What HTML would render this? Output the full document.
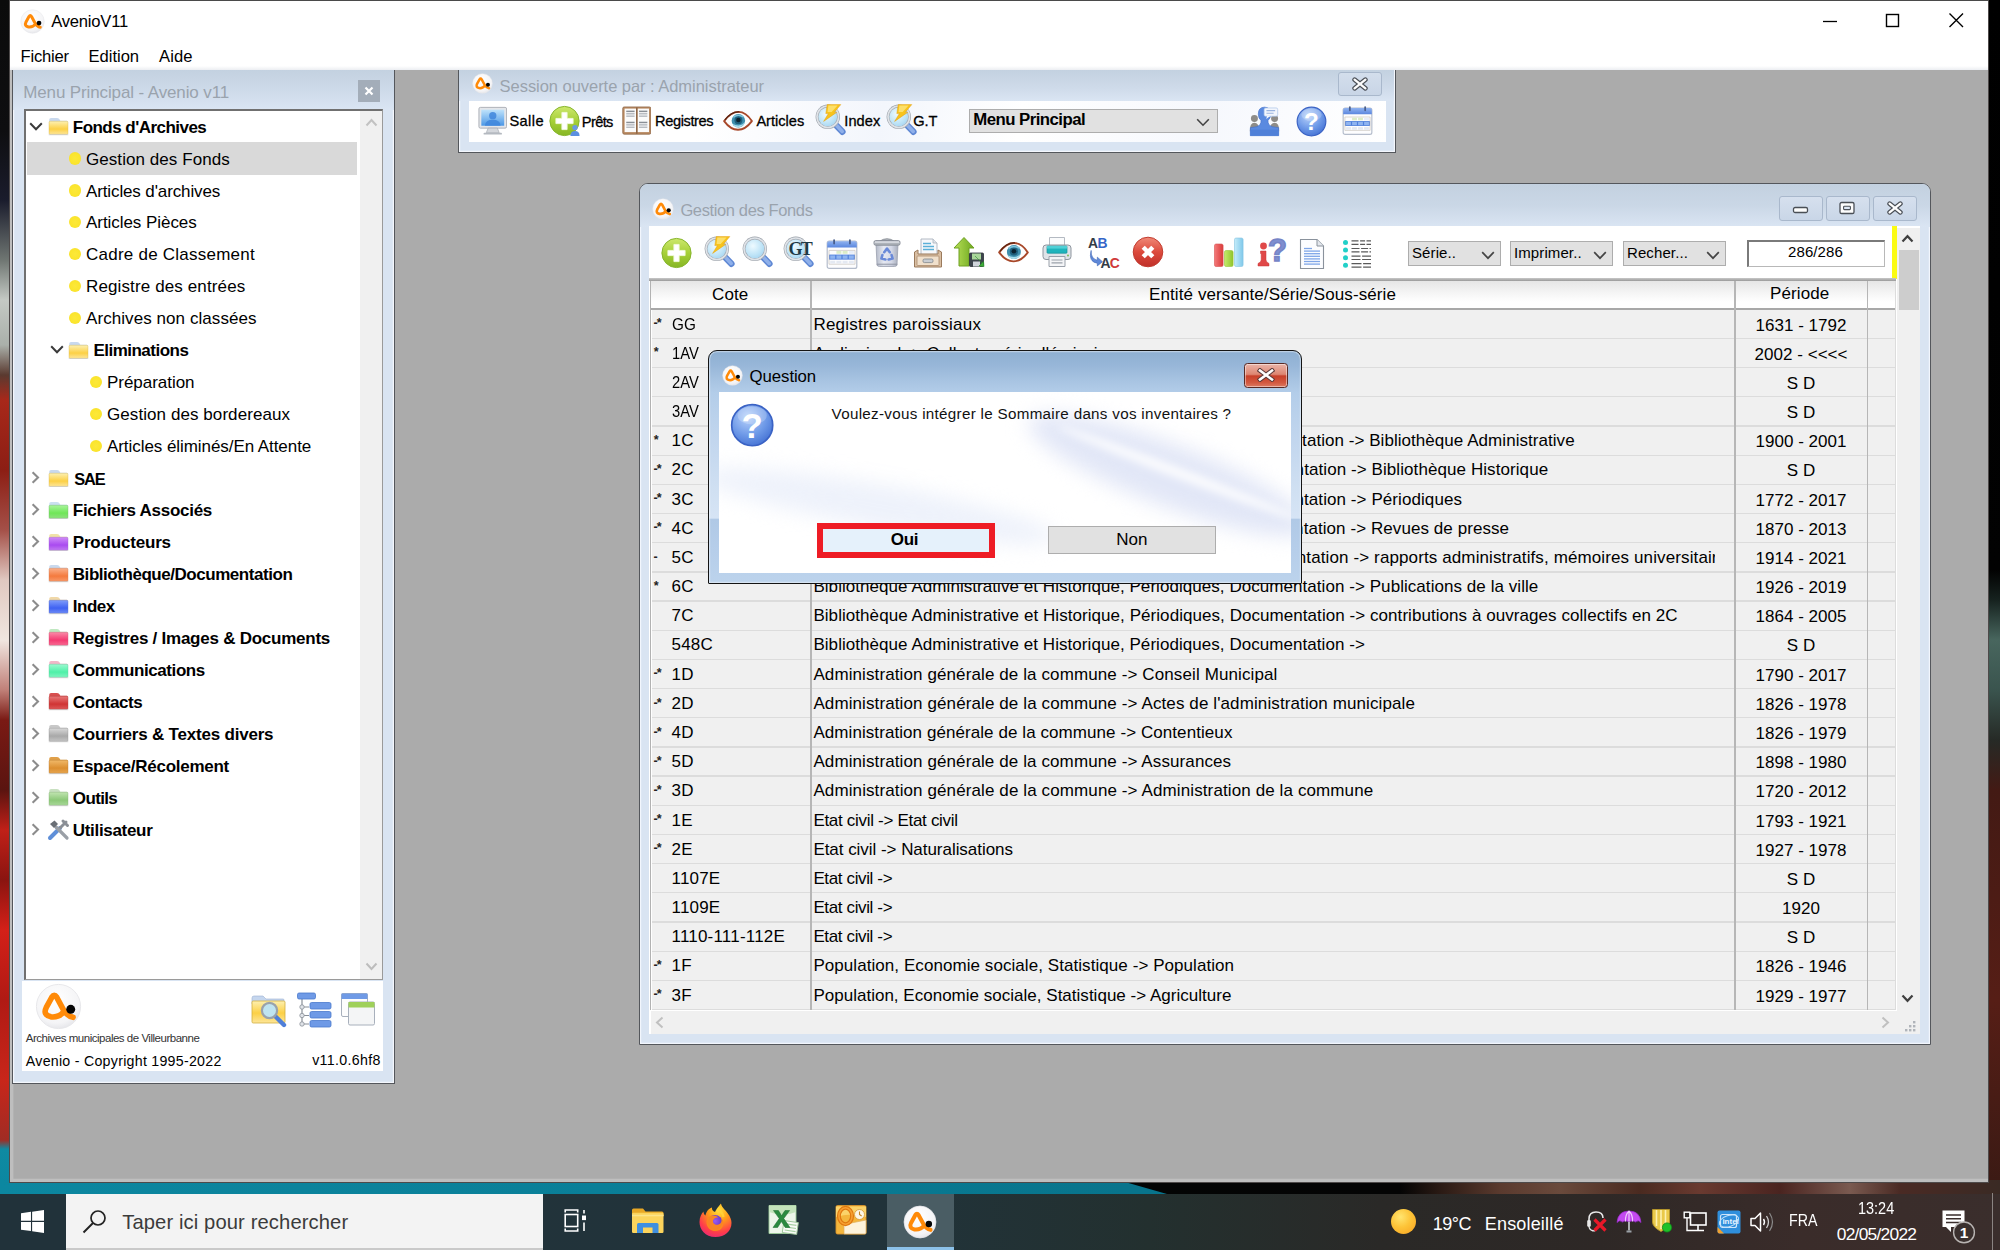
<!DOCTYPE html><html lang="fr"><head><meta charset="utf-8"><title>AvenioV11</title><style>html,body{margin:0;padding:0;}
body{width:2000px;height:1250px;position:relative;overflow:hidden;background:#000;font-family:"Liberation Sans",sans-serif;color:#000;}
div,svg{position:absolute;box-sizing:border-box;}
.t{white-space:pre;line-height:20px;font-size:17px;}
.b{font-weight:bold;}
.tr{white-space:pre;line-height:20px;font-size:17px;letter-spacing:0.07px;}
.tb{white-space:pre;line-height:20px;font-size:17px;font-weight:bold;letter-spacing:-0.5px;}
.cell{white-space:pre;line-height:20px;font-size:17px;letter-spacing:0.2px;}
.seg{white-space:pre;font-family:"Liberation Sans","DejaVu Sans",sans-serif;}
</style></head><body>
<svg width="0" height="0" style="left:0;top:0"><defs>
<radialGradient id="gLogo" cx="0.45" cy="0.35" r="0.75"><stop offset="0" stop-color="#ffffff"/><stop offset="0.7" stop-color="#f4f4f6"/><stop offset="1" stop-color="#dcdde2"/></radialGradient>
<linearGradient id="gGreen" x1="0" y1="0" x2="0" y2="1"><stop offset="0" stop-color="#cde86c"/><stop offset="0.5" stop-color="#a6d038"/><stop offset="1" stop-color="#86b624"/></linearGradient>
<linearGradient id="gRed" x1="0" y1="0" x2="0" y2="1"><stop offset="0" stop-color="#f08a78"/><stop offset="0.5" stop-color="#dc4a3c"/><stop offset="1" stop-color="#c0302a"/></linearGradient>
<radialGradient id="gLens" cx="0.4" cy="0.35" r="0.8"><stop offset="0" stop-color="#eefaff"/><stop offset="0.6" stop-color="#bfe4f7"/><stop offset="1" stop-color="#9fd0ee"/></radialGradient>
<linearGradient id="gHandle" x1="0" y1="0" x2="1" y2="1"><stop offset="0" stop-color="#9db8e8"/><stop offset="1" stop-color="#5b86d6"/></linearGradient>
<radialGradient id="gHelp" cx="0.4" cy="0.3" r="0.8"><stop offset="0" stop-color="#b9d3fb"/><stop offset="0.55" stop-color="#6f9ae8"/><stop offset="1" stop-color="#3c6ad0"/></radialGradient>
<linearGradient id="gMon" x1="0" y1="0" x2="0" y2="1"><stop offset="0" stop-color="#bfe3fb"/><stop offset="1" stop-color="#4b97e6"/></linearGradient>
<radialGradient id="gSun" cx="0.4" cy="0.35" r="0.75"><stop offset="0" stop-color="#ffe36a"/><stop offset="0.6" stop-color="#fdb92e"/><stop offset="1" stop-color="#f59a1c"/></radialGradient>
<linearGradient id="gFY" x1="0" y1="0" x2="0" y2="1"><stop offset="0" stop-color="#fdf0b0"/><stop offset="0.55" stop-color="#fcd045"/><stop offset="1" stop-color="#fde69a"/></linearGradient>
<linearGradient id="gCalTop" x1="0" y1="0" x2="0" y2="1"><stop offset="0" stop-color="#8fb2f0"/><stop offset="1" stop-color="#5a86de"/></linearGradient>
<linearGradient id="gTrash" x1="0" y1="0" x2="1" y2="0"><stop offset="0" stop-color="#a9b0b8"/><stop offset="0.5" stop-color="#dfe3e8"/><stop offset="1" stop-color="#9aa1a9"/></linearGradient>
<linearGradient id="gArrowG" x1="0" y1="0" x2="1" y2="0"><stop offset="0" stop-color="#b7df57"/><stop offset="1" stop-color="#6ea81f"/></linearGradient>
<linearGradient id="gTitle" x1="0" y1="0" x2="0" y2="1"><stop offset="0" stop-color="#c5d3e2"/><stop offset="1" stop-color="#dbe6f4"/></linearGradient>
<linearGradient id="gBtnRed" x1="0" y1="0" x2="0" y2="1"><stop offset="0" stop-color="#e9a99b"/><stop offset="0.45" stop-color="#d4644f"/><stop offset="0.5" stop-color="#c4432f"/><stop offset="1" stop-color="#d6705a"/></linearGradient>
</defs></svg>
<div style="left:0px;top:0px;width:12px;height:1250px;background:linear-gradient(180deg,#0b0b0b 0,#0e0e10 130px,#1a1c2c 200px,#6f7672 260px,#c4c9c4 300px,#aab0aa 345px,#5a3a30 375px,#a8281a 400px,#8c1e14 470px,#a45048 530px,#e0c8c0 580px,#f0e6e0 640px,#c08078 690px,#7a1a14 720px,#5a1410 790px,#c02018 830px,#8a1410 880px,#d42018 930px,#b01a14 1000px,#c8261a 1080px,#a02c24 1140px,#0f8aa2 1149px,#0a86a0 1194px);"></div>
<div style="left:1986px;top:0px;width:14px;height:1250px;background:linear-gradient(180deg,#000 0,#020202 570px,#16221f 600px,#48665e 640px,#3a544e 690px,#262a26 740px,#431a14 790px,#561e16 1000px,#3a1a14 1192px);"></div>
<div style="left:0px;top:1180px;width:2000px;height:14px;background:linear-gradient(90deg,#0c87a0 0,#0a7f98 600px,#08748c 1125px,#030404 1126px,#040404 1400px,#2a1a14 1440px,#5a3a2e 1500px,#6a4a3c 1560px,#4a2a20 1640px,#6a3a30 1700px,#4a2420 1780px,#7a5a50 1850px,#4a2a24 1900px,#3a2a24 2000px);"></div>
<svg style="left:1125px;top:1180px;" width="45" height="14" viewBox="0 0 45 14"><path d="M0 0 H45 V14 H0 Z" fill="#030404"/><path d="M0 0 L0 2 L42 14 L0 14 Z" fill="#08748c"/></svg>
<div style="left:9.2px;top:0px;width:1979.4px;height:1182.8px;background:#ababab;border:1px solid #4e4a4a;border-top:1px solid #4a4a4a;box-shadow:inset 3.4px 0 0 #bebebe, inset 0 -3.2px 0 #bebebe;"></div>
<div style="left:10px;top:1px;width:1978px;height:69px;background:#fff;"></div>
<div style="left:10px;top:65.5px;width:1978px;height:4.5px;background:linear-gradient(180deg,#fff,#eceef2);"></div>
<svg style="left:19.8px;top:8.6px;" width="25" height="25" viewBox="0 0 100 100"><circle cx="50" cy="50" r="47" fill="url(#gLogo)" stroke="#e6e6ea" stroke-width="2"/><path d="M81 73 C71 71 65 65 60 56 L46 30 Q41 22 36 30 L24 52 Q16 68 34 72 Q52 74 62 60" stroke="#ff8a08" stroke-width="12" fill="none" stroke-linecap="round" stroke-linejoin="round"/><circle cx="76" cy="56" r="9.5" fill="#050505"/></svg>
<div class="t" style="left:51.2px;top:11px;font-size:16.6px;line-height:22px;letter-spacing:-0.217px;">AvenioV11</div>
<div class="t" style="left:20.6px;top:45.6px;font-size:16.6px;line-height:22px;letter-spacing:-0.216px;">Fichier</div>
<div class="t" style="left:88.6px;top:45.6px;font-size:16.6px;line-height:22px;letter-spacing:-0.042px;">Edition</div>
<div class="t" style="left:159px;top:45.6px;font-size:16.6px;line-height:22px;letter-spacing:0.094px;">Aide</div>
<svg style="left:1815px;top:5px;" width="160" height="32" viewBox="0 0 160 32"><path d="M8 16.5 H22" stroke="#000" stroke-width="1.3"/><rect x="71.5" y="9.5" width="12" height="12" fill="none" stroke="#000" stroke-width="1.4"/><path d="M134.5 8.5 L148 22 M148 8.5 L134.5 22" stroke="#000" stroke-width="1.4"/></svg>
<div style="left:12px;top:70px;width:383.4px;height:1013.6px;background:#d9e4f2;border:1.5px solid #54575c;border-top:none;box-shadow:inset -1.2px -1.2px 0 #f4f7fd, inset 1.2px 0 0 #f4f7fd;"></div>
<div style="left:13.4px;top:70px;width:380.6px;height:40px;background:linear-gradient(180deg,#c3d1e0 0,#cbd8e7 40%,#dae5f3 100%);"></div>
<div class="t" style="left:23.2px;top:82.2px;font-size:17px;line-height:22px;letter-spacing:-0.121px;color:#9aa3ad;">Menu Principal - Avenio v11</div>
<div style="left:358px;top:80px;width:22px;height:22px;background:#a3adb9;"></div>
<svg style="left:358px;top:80px;" width="22" height="22" viewBox="0 0 22 22"><path d="M7.5 7.5 L14.5 14.5 M14.5 7.5 L7.5 14.5" stroke="#fff" stroke-width="2.2"/></svg>
<div style="left:24px;top:109px;width:359.4px;height:871px;background:#fff;border:2px solid #707070;border-right:1px solid #9a9a9a;border-bottom:1px solid #9a9a9a;"></div>
<div style="left:360.4px;top:111px;width:22px;height:868px;background:#f0f0f0;"></div>
<svg style="left:365px;top:118.4px;" width="13" height="9" viewBox="0 0 13 9"><path d="M1.5 7.5 L6.5 2 L11.5 7.5" fill="none" stroke="#c2c2c2" stroke-width="2"/></svg>
<svg style="left:365px;top:962px;" width="13" height="9" viewBox="0 0 13 9"><path d="M1.5 1.5 L6.5 7 L11.5 1.5" fill="none" stroke="#bdbdbd" stroke-width="2"/></svg>
<div style="left:27px;top:142.4px;width:330.4px;height:32.4px;background:#d9d9d9;"></div>
<svg style="left:29.0px;top:121.7px;" width="14" height="9" viewBox="0 0 14 9"><path d="M1.2 1.2 L7 7.2 L12.8 1.2" fill="none" stroke="#3a3a3a" stroke-width="2"/></svg>
<svg style="left:47.8px;top:117.0px;" width="21" height="18.6" viewBox="0 0 22 20"><defs><linearGradient id="gF1" x1="0" y1="0" x2="0" y2="1"><stop offset="0" stop-color="#fdf0b0"/><stop offset="0.6" stop-color="#fcd045"/><stop offset="1" stop-color="#fde69a"/></linearGradient></defs><path d="M1 3 Q1 1 3 1 L9 1 Q11 1 12 2.5 L13 4 L20 4 Q21 4 21 5 L21 8 L1 8 Z" fill="#c9d9ee"/><rect x="0.8" y="4.6" width="20.4" height="14" rx="1.2" fill="url(#gF1)" stroke="#d9b64a" stroke-width="0.6" stroke-opacity="0.7"/><rect x="0.5" y="18.4" width="21" height="1.2" fill="#b8b8b8" opacity="0.55"/></svg>
<div class="t" style="left:72.8px;top:117.60000000000001px;font-size:17px;line-height:20px;letter-spacing:-0.531px;font-weight:bold;">Fonds d'Archives</div>
<div style="left:69.0px;top:152.162px;width:12.4px;height:12.4px;border-radius:50%;background:radial-gradient(circle,#fce83a 0,#fbe52c 60%,#f2dc3c 85%,#f4e67a 100%);"></div>
<div class="t" style="left:86.0px;top:149.562px;font-size:17px;line-height:20px;letter-spacing:0.065px;">Gestion des Fonds</div>
<div style="left:69.0px;top:184.124px;width:12.4px;height:12.4px;border-radius:50%;background:radial-gradient(circle,#fce83a 0,#fbe52c 60%,#f2dc3c 85%,#f4e67a 100%);"></div>
<div class="t" style="left:86.0px;top:181.524px;font-size:17px;line-height:20px;letter-spacing:-0.123px;">Articles d'archives</div>
<div style="left:69.0px;top:216.086px;width:12.4px;height:12.4px;border-radius:50%;background:radial-gradient(circle,#fce83a 0,#fbe52c 60%,#f2dc3c 85%,#f4e67a 100%);"></div>
<div class="t" style="left:86.0px;top:213.48600000000002px;font-size:17px;line-height:20px;letter-spacing:-0.052px;">Articles Pièces</div>
<div style="left:69.0px;top:248.048px;width:12.4px;height:12.4px;border-radius:50%;background:radial-gradient(circle,#fce83a 0,#fbe52c 60%,#f2dc3c 85%,#f4e67a 100%);"></div>
<div class="t" style="left:86.0px;top:245.448px;font-size:17px;line-height:20px;letter-spacing:0.24px;">Cadre de Classement</div>
<div style="left:69.0px;top:280.01px;width:12.4px;height:12.4px;border-radius:50%;background:radial-gradient(circle,#fce83a 0,#fbe52c 60%,#f2dc3c 85%,#f4e67a 100%);"></div>
<div class="t" style="left:86.0px;top:277.40999999999997px;font-size:17px;line-height:20px;letter-spacing:0.125px;">Registre des entrées</div>
<div style="left:69.0px;top:311.972px;width:12.4px;height:12.4px;border-radius:50%;background:radial-gradient(circle,#fce83a 0,#fbe52c 60%,#f2dc3c 85%,#f4e67a 100%);"></div>
<div class="t" style="left:86.0px;top:309.37199999999996px;font-size:17px;line-height:20px;letter-spacing:0.068px;">Archives non classées</div>
<svg style="left:49.6px;top:345.434px;" width="14" height="9" viewBox="0 0 14 9"><path d="M1.2 1.2 L7 7.2 L12.8 1.2" fill="none" stroke="#3a3a3a" stroke-width="2"/></svg>
<svg style="left:68.4px;top:340.73400000000004px;" width="21" height="18.6" viewBox="0 0 22 20"><defs><linearGradient id="gF2" x1="0" y1="0" x2="0" y2="1"><stop offset="0" stop-color="#fdf0b0"/><stop offset="0.6" stop-color="#fcd045"/><stop offset="1" stop-color="#fde69a"/></linearGradient></defs><path d="M1 3 Q1 1 3 1 L9 1 Q11 1 12 2.5 L13 4 L20 4 Q21 4 21 5 L21 8 L1 8 Z" fill="#c9d9ee"/><rect x="0.8" y="4.6" width="20.4" height="14" rx="1.2" fill="url(#gF2)" stroke="#d9b64a" stroke-width="0.6" stroke-opacity="0.7"/><rect x="0.5" y="18.4" width="21" height="1.2" fill="#b8b8b8" opacity="0.55"/></svg>
<div class="t" style="left:93.4px;top:341.334px;font-size:17px;line-height:20px;letter-spacing:-0.507px;font-weight:bold;">Eliminations</div>
<div style="left:90.0px;top:375.896px;width:12.4px;height:12.4px;border-radius:50%;background:radial-gradient(circle,#fce83a 0,#fbe52c 60%,#f2dc3c 85%,#f4e67a 100%);"></div>
<div class="t" style="left:107.0px;top:373.296px;font-size:17px;line-height:20px;letter-spacing:-0.039px;">Préparation</div>
<div style="left:90.0px;top:407.858px;width:12.4px;height:12.4px;border-radius:50%;background:radial-gradient(circle,#fce83a 0,#fbe52c 60%,#f2dc3c 85%,#f4e67a 100%);"></div>
<div class="t" style="left:107.0px;top:405.258px;font-size:17px;line-height:20px;letter-spacing:0.074px;">Gestion des bordereaux</div>
<div style="left:90.0px;top:439.82px;width:12.4px;height:12.4px;border-radius:50%;background:radial-gradient(circle,#fce83a 0,#fbe52c 60%,#f2dc3c 85%,#f4e67a 100%);"></div>
<div class="t" style="left:107.0px;top:437.21999999999997px;font-size:17px;line-height:20px;letter-spacing:-0.064px;">Articles éliminés/En Attente</div>
<svg style="left:31.4px;top:471.18199999999996px;" width="9" height="13" viewBox="0 0 9 13"><path d="M1.6 1.2 L7 6.5 L1.6 11.8" fill="none" stroke="#8c8c8c" stroke-width="2.1"/></svg>
<svg style="left:47.8px;top:468.582px;" width="21" height="18.6" viewBox="0 0 22 20"><defs><linearGradient id="gF3" x1="0" y1="0" x2="0" y2="1"><stop offset="0" stop-color="#fdf0b0"/><stop offset="0.6" stop-color="#fcd045"/><stop offset="1" stop-color="#fde69a"/></linearGradient></defs><path d="M1 3 Q1 1 3 1 L9 1 Q11 1 12 2.5 L13 4 L20 4 Q21 4 21 5 L21 8 L1 8 Z" fill="#c9d9ee"/><rect x="0.8" y="4.6" width="20.4" height="14" rx="1.2" fill="url(#gF3)" stroke="#d9b64a" stroke-width="0.6" stroke-opacity="0.7"/><rect x="0.5" y="18.4" width="21" height="1.2" fill="#b8b8b8" opacity="0.55"/></svg>
<div class="t" style="left:74.2px;top:469.18199999999996px;font-size:16.4px;font-weight:bold;letter-spacing:-1.1px;line-height:20px;">SAE</div>
<svg style="left:31.4px;top:503.14399999999995px;" width="9" height="13" viewBox="0 0 9 13"><path d="M1.6 1.2 L7 6.5 L1.6 11.8" fill="none" stroke="#8c8c8c" stroke-width="2.1"/></svg>
<svg style="left:47.8px;top:500.544px;" width="21" height="18.6" viewBox="0 0 22 20"><defs><linearGradient id="gF4" x1="0" y1="0" x2="0" y2="1"><stop offset="0" stop-color="#a8f59a"/><stop offset="0.6" stop-color="#6fe658"/><stop offset="1" stop-color="#8fe07f"/></linearGradient></defs><path d="M1 3 Q1 1 3 1 L9 1 Q11 1 12 2.5 L13 4 L20 4 Q21 4 21 5 L21 8 L1 8 Z" fill="#cbe0f0"/><rect x="0.8" y="4.6" width="20.4" height="14" rx="1.2" fill="url(#gF4)" stroke="#6cb860" stroke-width="0.6" stroke-opacity="0.7"/><rect x="0.5" y="18.4" width="21" height="1.2" fill="#b8b8b8" opacity="0.55"/></svg>
<div class="t" style="left:72.8px;top:501.14399999999995px;font-size:17px;line-height:20px;letter-spacing:-0.278px;font-weight:bold;">Fichiers Associés</div>
<svg style="left:31.4px;top:535.106px;" width="9" height="13" viewBox="0 0 9 13"><path d="M1.6 1.2 L7 6.5 L1.6 11.8" fill="none" stroke="#8c8c8c" stroke-width="2.1"/></svg>
<svg style="left:47.8px;top:532.506px;" width="21" height="18.6" viewBox="0 0 22 20"><defs><linearGradient id="gF5" x1="0" y1="0" x2="0" y2="1"><stop offset="0" stop-color="#cf8cf8"/><stop offset="0.6" stop-color="#a94af0"/><stop offset="1" stop-color="#c07af0"/></linearGradient></defs><path d="M1 3 Q1 1 3 1 L9 1 Q11 1 12 2.5 L13 4 L20 4 Q21 4 21 5 L21 8 L1 8 Z" fill="#f0e3a8"/><rect x="0.8" y="4.6" width="20.4" height="14" rx="1.2" fill="url(#gF5)" stroke="#9a5ad0" stroke-width="0.6" stroke-opacity="0.7"/><rect x="0.5" y="18.4" width="21" height="1.2" fill="#b8b8b8" opacity="0.55"/></svg>
<div class="t" style="left:72.8px;top:533.106px;font-size:17px;line-height:20px;letter-spacing:-0.189px;font-weight:bold;">Producteurs</div>
<svg style="left:31.4px;top:567.068px;" width="9" height="13" viewBox="0 0 9 13"><path d="M1.6 1.2 L7 6.5 L1.6 11.8" fill="none" stroke="#8c8c8c" stroke-width="2.1"/></svg>
<svg style="left:47.8px;top:564.468px;" width="21" height="18.6" viewBox="0 0 22 20"><defs><linearGradient id="gF6" x1="0" y1="0" x2="0" y2="1"><stop offset="0" stop-color="#fbb08a"/><stop offset="0.6" stop-color="#f47a3e"/><stop offset="1" stop-color="#f89868"/></linearGradient></defs><path d="M1 3 Q1 1 3 1 L9 1 Q11 1 12 2.5 L13 4 L20 4 Q21 4 21 5 L21 8 L1 8 Z" fill="#c9d9ee"/><rect x="0.8" y="4.6" width="20.4" height="14" rx="1.2" fill="url(#gF6)" stroke="#d0784e" stroke-width="0.6" stroke-opacity="0.7"/><rect x="0.5" y="18.4" width="21" height="1.2" fill="#b8b8b8" opacity="0.55"/></svg>
<div class="t" style="left:72.8px;top:565.068px;font-size:17px;line-height:20px;letter-spacing:-0.456px;font-weight:bold;">Bibliothèque/Documentation</div>
<svg style="left:31.4px;top:599.03px;" width="9" height="13" viewBox="0 0 9 13"><path d="M1.6 1.2 L7 6.5 L1.6 11.8" fill="none" stroke="#8c8c8c" stroke-width="2.1"/></svg>
<svg style="left:47.8px;top:596.43px;" width="21" height="18.6" viewBox="0 0 22 20"><defs><linearGradient id="gF7" x1="0" y1="0" x2="0" y2="1"><stop offset="0" stop-color="#7f9cfa"/><stop offset="0.6" stop-color="#3f62f2"/><stop offset="1" stop-color="#6f8cf6"/></linearGradient></defs><path d="M1 3 Q1 1 3 1 L9 1 Q11 1 12 2.5 L13 4 L20 4 Q21 4 21 5 L21 8 L1 8 Z" fill="#f0d8a8"/><rect x="0.8" y="4.6" width="20.4" height="14" rx="1.2" fill="url(#gF7)" stroke="#4f68c8" stroke-width="0.6" stroke-opacity="0.7"/><rect x="0.5" y="18.4" width="21" height="1.2" fill="#b8b8b8" opacity="0.55"/></svg>
<div class="t" style="left:72.8px;top:597.03px;font-size:17px;line-height:20px;letter-spacing:-0.477px;font-weight:bold;">Index</div>
<svg style="left:31.4px;top:630.992px;" width="9" height="13" viewBox="0 0 9 13"><path d="M1.6 1.2 L7 6.5 L1.6 11.8" fill="none" stroke="#8c8c8c" stroke-width="2.1"/></svg>
<svg style="left:47.8px;top:628.3919999999999px;" width="21" height="18.6" viewBox="0 0 22 20"><defs><linearGradient id="gF8" x1="0" y1="0" x2="0" y2="1"><stop offset="0" stop-color="#fa8aa8"/><stop offset="0.6" stop-color="#f43a72"/><stop offset="1" stop-color="#f76a92"/></linearGradient></defs><path d="M1 3 Q1 1 3 1 L9 1 Q11 1 12 2.5 L13 4 L20 4 Q21 4 21 5 L21 8 L1 8 Z" fill="#bfe8c0"/><rect x="0.8" y="4.6" width="20.4" height="14" rx="1.2" fill="url(#gF8)" stroke="#d04a72" stroke-width="0.6" stroke-opacity="0.7"/><rect x="0.5" y="18.4" width="21" height="1.2" fill="#b8b8b8" opacity="0.55"/></svg>
<div class="t" style="left:72.8px;top:628.992px;font-size:17px;line-height:20px;letter-spacing:-0.242px;font-weight:bold;">Registres / Images &amp; Documents</div>
<svg style="left:31.4px;top:662.9540000000001px;" width="9" height="13" viewBox="0 0 9 13"><path d="M1.6 1.2 L7 6.5 L1.6 11.8" fill="none" stroke="#8c8c8c" stroke-width="2.1"/></svg>
<svg style="left:47.8px;top:660.354px;" width="21" height="18.6" viewBox="0 0 22 20"><defs><linearGradient id="gF9" x1="0" y1="0" x2="0" y2="1"><stop offset="0" stop-color="#9afad0"/><stop offset="0.6" stop-color="#4ff0a8"/><stop offset="1" stop-color="#80f4c0"/></linearGradient></defs><path d="M1 3 Q1 1 3 1 L9 1 Q11 1 12 2.5 L13 4 L20 4 Q21 4 21 5 L21 8 L1 8 Z" fill="#f0b8c8"/><rect x="0.8" y="4.6" width="20.4" height="14" rx="1.2" fill="url(#gF9)" stroke="#58c898" stroke-width="0.6" stroke-opacity="0.7"/><rect x="0.5" y="18.4" width="21" height="1.2" fill="#b8b8b8" opacity="0.55"/></svg>
<div class="t" style="left:72.8px;top:660.9540000000001px;font-size:17px;line-height:20px;letter-spacing:-0.416px;font-weight:bold;">Communications</div>
<svg style="left:31.4px;top:694.916px;" width="9" height="13" viewBox="0 0 9 13"><path d="M1.6 1.2 L7 6.5 L1.6 11.8" fill="none" stroke="#8c8c8c" stroke-width="2.1"/></svg>
<svg style="left:47.8px;top:692.316px;" width="21" height="18.6" viewBox="0 0 22 20"><defs><linearGradient id="gF10" x1="0" y1="0" x2="0" y2="1"><stop offset="0" stop-color="#e87878"/><stop offset="0.6" stop-color="#d03434"/><stop offset="1" stop-color="#dc5858"/></linearGradient></defs><path d="M1 3 Q1 1 3 1 L9 1 Q11 1 12 2.5 L13 4 L20 4 Q21 4 21 5 L21 8 L1 8 Z" fill="#d85050"/><rect x="0.8" y="4.6" width="20.4" height="14" rx="1.2" fill="url(#gF10)" stroke="#a83838" stroke-width="0.6" stroke-opacity="0.7"/><rect x="0.5" y="18.4" width="21" height="1.2" fill="#b8b8b8" opacity="0.55"/></svg>
<div class="t" style="left:72.8px;top:692.916px;font-size:17px;line-height:20px;letter-spacing:-0.391px;font-weight:bold;">Contacts</div>
<svg style="left:31.4px;top:726.878px;" width="9" height="13" viewBox="0 0 9 13"><path d="M1.6 1.2 L7 6.5 L1.6 11.8" fill="none" stroke="#8c8c8c" stroke-width="2.1"/></svg>
<svg style="left:47.8px;top:724.278px;" width="21" height="18.6" viewBox="0 0 22 20"><defs><linearGradient id="gF11" x1="0" y1="0" x2="0" y2="1"><stop offset="0" stop-color="#d8d8d8"/><stop offset="0.6" stop-color="#a8a8a8"/><stop offset="1" stop-color="#c4c4c4"/></linearGradient></defs><path d="M1 3 Q1 1 3 1 L9 1 Q11 1 12 2.5 L13 4 L20 4 Q21 4 21 5 L21 8 L1 8 Z" fill="#c8c8c8"/><rect x="0.8" y="4.6" width="20.4" height="14" rx="1.2" fill="url(#gF11)" stroke="#909090" stroke-width="0.6" stroke-opacity="0.7"/><rect x="0.5" y="18.4" width="21" height="1.2" fill="#b8b8b8" opacity="0.55"/></svg>
<div class="t" style="left:72.8px;top:724.878px;font-size:17px;line-height:20px;letter-spacing:-0.205px;font-weight:bold;">Courriers &amp; Textes divers</div>
<svg style="left:31.4px;top:758.84px;" width="9" height="13" viewBox="0 0 9 13"><path d="M1.6 1.2 L7 6.5 L1.6 11.8" fill="none" stroke="#8c8c8c" stroke-width="2.1"/></svg>
<svg style="left:47.8px;top:756.24px;" width="21" height="18.6" viewBox="0 0 22 20"><defs><linearGradient id="gF12" x1="0" y1="0" x2="0" y2="1"><stop offset="0" stop-color="#f0b868"/><stop offset="0.6" stop-color="#dc8f30"/><stop offset="1" stop-color="#e6a650"/></linearGradient></defs><path d="M1 3 Q1 1 3 1 L9 1 Q11 1 12 2.5 L13 4 L20 4 Q21 4 21 5 L21 8 L1 8 Z" fill="#e0a04a"/><rect x="0.8" y="4.6" width="20.4" height="14" rx="1.2" fill="url(#gF12)" stroke="#b87a30" stroke-width="0.6" stroke-opacity="0.7"/><rect x="0.5" y="18.4" width="21" height="1.2" fill="#b8b8b8" opacity="0.55"/></svg>
<div class="t" style="left:72.8px;top:756.84px;font-size:17px;line-height:20px;letter-spacing:-0.259px;font-weight:bold;">Espace/Récolement</div>
<svg style="left:31.4px;top:790.802px;" width="9" height="13" viewBox="0 0 9 13"><path d="M1.6 1.2 L7 6.5 L1.6 11.8" fill="none" stroke="#8c8c8c" stroke-width="2.1"/></svg>
<svg style="left:47.8px;top:788.202px;" width="21" height="18.6" viewBox="0 0 22 20"><defs><linearGradient id="gF13" x1="0" y1="0" x2="0" y2="1"><stop offset="0" stop-color="#c0e4b0"/><stop offset="0.6" stop-color="#8cc878"/><stop offset="1" stop-color="#a8d898"/></linearGradient></defs><path d="M1 3 Q1 1 3 1 L9 1 Q11 1 12 2.5 L13 4 L20 4 Q21 4 21 5 L21 8 L1 8 Z" fill="#c8e0c0"/><rect x="0.8" y="4.6" width="20.4" height="14" rx="1.2" fill="url(#gF13)" stroke="#80b070" stroke-width="0.6" stroke-opacity="0.7"/><rect x="0.5" y="18.4" width="21" height="1.2" fill="#b8b8b8" opacity="0.55"/></svg>
<div class="t" style="left:72.8px;top:788.802px;font-size:17px;line-height:20px;letter-spacing:-0.634px;font-weight:bold;">Outils</div>
<svg style="left:31.4px;top:822.764px;" width="9" height="13" viewBox="0 0 9 13"><path d="M1.6 1.2 L7 6.5 L1.6 11.8" fill="none" stroke="#8c8c8c" stroke-width="2.1"/></svg>
<svg style="left:47px;top:818.364px;" width="23" height="23" viewBox="0 0 23 23"><path d="M3 20 L13 10" stroke="#5f8fd8" stroke-width="4" stroke-linecap="round"/><path d="M12 11 L19 4 M16 3 L20.5 7.5" stroke="#8a8f96" stroke-width="3" stroke-linecap="round"/><path d="M20 20 L9 9" stroke="#9a9fa6" stroke-width="3.2" stroke-linecap="round"/><path d="M3 6 L7.5 2.5 L11 6 L7 10 Z" fill="#6a6f76"/></svg>
<div class="t" style="left:72.8px;top:820.764px;font-size:17px;line-height:20px;letter-spacing:-0.314px;font-weight:bold;">Utilisateur</div>
<div style="left:22.4px;top:981px;width:361px;height:89.6px;background:#fff;"></div>
<svg style="left:35px;top:983px;" width="47" height="47" viewBox="0 0 100 100"><circle cx="50" cy="50" r="47" fill="url(#gLogo)" stroke="#e6e6ea" stroke-width="2"/><path d="M81 73 C71 71 65 65 60 56 L46 30 Q41 22 36 30 L24 52 Q16 68 34 72 Q52 74 62 60" stroke="#ff8a08" stroke-width="12" fill="none" stroke-linecap="round" stroke-linejoin="round"/><circle cx="76" cy="56" r="9.5" fill="#050505"/></svg>
<div class="t" style="left:25.8px;top:1030px;font-size:11.5px;line-height:16px;letter-spacing:-0.484px;color:#333;">Archives municipales de Villeurbanne</div>
<div class="t" style="left:25.8px;top:1051px;font-size:14.2px;line-height:20px;letter-spacing:0.269px;">Avenio - Copyright 1995-2022</div>
<div class="t" style="left:312.2px;top:1050px;font-size:14.2px;line-height:20px;letter-spacing:0.331px;">v11.0.6hf8</div>
<svg style="left:251px;top:992px;" width="36" height="36" viewBox="0 0 36 36"><path d="M1 6 Q1 4 3 4 L12 4 L15 7 L32 7 Q33 7 33 8 L33 12 L1 12 Z" fill="#c5d6ee" stroke="#9ab0d0" stroke-width="0.6"/><rect x="1" y="9" width="33" height="22" rx="1.2" fill="url(#gFY)" stroke="#d2ae40" stroke-width="0.8"/><path d="M24 24 L33 33" stroke="#4f7fd8" stroke-width="4.4" stroke-linecap="round"/><circle cx="18.5" cy="18.5" r="7.6" fill="#bfe4f0" stroke="#9aa2aa" stroke-width="2.2"/></svg>
<svg style="left:296px;top:992px;" width="37" height="36" viewBox="0 0 37 36"><path d="M6 6 V32 M6 15 H13 M6 23.5 H13 M6 32 H13" stroke="#8a9098" stroke-width="1.2" fill="none"/><rect x="1.5" y="1" width="18" height="6" rx="1.6" fill="#6f9ae6" stroke="#4a78cc" stroke-width="0.8"/><rect x="14" y="10.5" width="21" height="6.5" rx="1.6" fill="#6f9ae6" stroke="#4a78cc" stroke-width="0.8"/><rect x="14" y="19.5" width="21" height="6.5" rx="1.6" fill="#6f9ae6" stroke="#4a78cc" stroke-width="0.8"/><rect x="14" y="28.5" width="21" height="6.5" rx="1.6" fill="#6f9ae6" stroke="#4a78cc" stroke-width="0.8"/><circle cx="6" cy="15" r="2.2" fill="#e0e3e8" stroke="#8a9098" stroke-width="0.8"/><circle cx="6" cy="23.5" r="2.2" fill="#e0e3e8" stroke="#8a9098" stroke-width="0.8"/><circle cx="6" cy="32" r="2.2" fill="#e0e3e8" stroke="#8a9098" stroke-width="0.8"/></svg>
<svg style="left:340px;top:992px;" width="37" height="36" viewBox="0 0 37 36"><rect x="1.5" y="1.5" width="26" height="23" rx="1.5" fill="#fdfdfd" stroke="#a8b0bc" stroke-width="1"/><rect x="1.5" y="1.5" width="26" height="5.5" fill="#6f9ae6"/><rect x="8.5" y="10" width="26" height="23" rx="1.5" fill="#f4f5f6" stroke="#a8b0bc" stroke-width="1"/><rect x="8.5" y="10" width="26" height="5.5" fill="#9fd05a"/></svg>
<div style="left:457.6px;top:70px;width:938px;height:83.2px;background:#d9e4f2;border:1.5px solid #54575c;border-top:none;box-shadow:inset -1.2px -1.2px 0 #f4f7fd, inset 1.2px 0 0 #f4f7fd;"></div>
<div style="left:459px;top:70px;width:935.4px;height:31px;background:linear-gradient(180deg,#c3d1e0 0,#cfdbea 60%,#dae5f3 100%);"></div>
<svg style="left:472px;top:73px;" width="21" height="21" viewBox="0 0 100 100"><circle cx="50" cy="50" r="47" fill="url(#gLogo)" stroke="#e6e6ea" stroke-width="2"/><path d="M81 73 C71 71 65 65 60 56 L46 30 Q41 22 36 30 L24 52 Q16 68 34 72 Q52 74 62 60" stroke="#ff8a08" stroke-width="12" fill="none" stroke-linecap="round" stroke-linejoin="round"/><circle cx="76" cy="56" r="9.5" fill="#050505"/></svg>
<div class="t" style="left:499.6px;top:74.6px;font-size:16.5px;line-height:22px;letter-spacing:-0.042px;color:#9aa3ad;">Session ouverte par : Administrateur</div>
<div style="left:1338.2px;top:72px;width:43.6px;height:24px;border:1px solid #a9b8cc;border-radius:3px;background:linear-gradient(180deg,#d3deec,#c8d5e6);"></div>
<svg style="left:1351px;top:77px;" width="18" height="14" viewBox="0 0 18 14"><path d="M3.6 2.6 L14.4 11.4 M14.4 2.6 L3.6 11.4" stroke="#4a4f56" stroke-width="4.6" stroke-linecap="round"/><path d="M3.6 2.6 L14.4 11.4 M14.4 2.6 L3.6 11.4" stroke="#fdfdfd" stroke-width="2.3" stroke-linecap="round"/></svg>
<div style="left:469px;top:101px;width:917px;height:41px;background:linear-gradient(100deg,#fff 0,#fff 25%,#f3f6fc 45%,#fff 60%,#f6f8fd 80%,#fff 100%);"></div>
<svg style="left:477.5px;top:105.5px;" width="29.5" height="29.5" viewBox="0 0 32 32"><rect x="1" y="1.5" width="30" height="22.5" rx="1.6" fill="#e4e6ea" stroke="#a8adb4" stroke-width="1"/><rect x="3.6" y="4" width="24.8" height="17.4" fill="url(#gMon)"/><circle cx="16" cy="10.5" r="4" fill="#3f86dc" opacity="0.85"/><path d="M7.5 21.4 Q8 15 16 15 Q24 15 24.5 21.4 Z" fill="#3f86dc" opacity="0.85"/><path d="M11 24 L9 29 H23 L21 24 Z" fill="#d4d7dc" stroke="#a8adb4" stroke-width="0.8"/><rect x="6" y="29" width="20" height="2" rx="1" fill="#b4b9c0"/></svg>
<div class="t" style="left:509.4px;top:112.4px;font-size:14.6px;line-height:18px;letter-spacing:0.437px;-webkit-text-stroke:0.3px #000;">Salle</div>
<svg style="left:549px;top:105px;" width="32" height="32" viewBox="0 0 32 32"><circle cx="15.5" cy="16" r="14.6" fill="url(#gGreen)" stroke="#86b52c" stroke-width="1"/><path d="M12.9 7.4 H18.1 V13.4 H24.1 V18.6 H18.1 V24.6 H12.9 V18.6 H6.9 V13.4 H12.9 Z" fill="#fff" stroke="#f2f9dc" stroke-width="0.9" stroke-linejoin="round"/><circle cx="26" cy="22.6" r="2.7" fill="#6a98e4"/><path d="M21.4 31 Q21.4 26 26 26 Q30.6 26 30.6 31 Z" fill="#5b8fe0"/></svg>
<div class="t" style="left:581.8px;top:113.4px;font-size:14.6px;line-height:18px;letter-spacing:-0.616px;-webkit-text-stroke:0.3px #000;">Prêts</div>
<svg style="left:621.6px;top:105.8px;" width="29.6" height="29.6" viewBox="0 0 32 32"><rect x="0.8" y="1" width="30.4" height="29.5" rx="1.6" fill="#b98a62" stroke="#8c6444" stroke-width="0.8"/><rect x="2.8" y="2.8" width="12.6" height="25.4" fill="#fbfbfb"/><rect x="16.6" y="2.8" width="12.6" height="25.4" fill="#fbfbfb"/><rect x="15.2" y="1.5" width="1.6" height="28.5" fill="#8c6444"/><rect x="4.6" y="5" width="9" height="1.6" fill="#8a8f96"/><rect x="4.6" y="7.6" width="9" height="1.6" fill="#b8bcc2"/><rect x="4.6" y="10.2" width="9" height="1.6" fill="#b8bcc2"/><rect x="4.6" y="17" width="9" height="1.6" fill="#8a8f96"/><rect x="4.6" y="19.6" width="9" height="1.6" fill="#b8bcc2"/><rect x="4.6" y="22.2" width="9" height="1.6" fill="#b8bcc2"/><rect x="18.4" y="5" width="9" height="1.6" fill="#8a8f96"/><rect x="18.4" y="7.6" width="9" height="1.6" fill="#b8bcc2"/><rect x="18.4" y="10.2" width="9" height="1.6" fill="#b8bcc2"/><rect x="18.4" y="17" width="9" height="1.6" fill="#8a8f96"/><rect x="18.4" y="19.6" width="9" height="1.6" fill="#b8bcc2"/><rect x="18.4" y="22.2" width="9" height="1.6" fill="#b8bcc2"/></svg>
<div class="t" style="left:655px;top:112.4px;font-size:14.6px;line-height:18px;letter-spacing:-0.38px;-webkit-text-stroke:0.3px #000;">Registres</div>
<svg style="left:723.4px;top:110px;" width="30" height="21.599999999999998" viewBox="0 0 32 23"><path d="M1.2 11.8 Q8.5 2 16.5 2 Q24.5 2 30.8 11.8 Q24 21 16 21 Q8 21 1.2 11.8 Z" fill="#fdfdfd" stroke="#a8482a" stroke-width="2" stroke-linejoin="round"/><path d="M2 10.6 Q9 1.4 17.5 2" stroke="#5a2412" stroke-width="1.3" fill="none"/><circle cx="16.4" cy="11.4" r="7.2" fill="#3f8fae"/><path d="M10.4 14.6 Q12 19 17.6 18.4 Q22.6 17.4 23.4 12.6 Q21 16.4 16.4 16.4 Q12.6 16.4 10.4 14.6 Z" fill="#a8dcec"/><circle cx="16.4" cy="10.8" r="4.2" fill="#1f5f7c"/><circle cx="16.4" cy="10.6" r="2.4" fill="#0a2230"/><path d="M11 7.6 Q16 3.8 22 7.4" stroke="#7fc4dc" stroke-width="1.4" fill="none"/></svg>
<div class="t" style="left:756.4px;top:112.4px;font-size:14.6px;line-height:18px;letter-spacing:-0.006px;-webkit-text-stroke:0.3px #000;">Articles</div>
<svg style="left:815px;top:104px;" width="32" height="32" viewBox="0 0 32 32"><path d="M21.6 21.8 L27.4 27.8" stroke="#5f88d4" stroke-width="6.4" stroke-linecap="round"/><path d="M21.6 21.6 L27.2 27.4" stroke="#8fb0ea" stroke-width="3.6" stroke-linecap="round"/><circle cx="12.8" cy="12.8" r="12.2" fill="#9aa0a8"/><circle cx="12.8" cy="12.8" r="11.6" fill="#dfe3e8"/><circle cx="12.8" cy="12.8" r="10" fill="#a4aab2"/><circle cx="12.8" cy="12.8" r="9.4" fill="url(#gLens)"/><path d="M12.2 0.6 L25.8 0.6 L19.2 8.4 L21.6 8.4 L8.6 17.4 L13.4 9.6 L10.8 9.6 Z" fill="#f8c41c" stroke="#e4a018" stroke-width="0.5"/><path d="M13.4 1.6 L22.6 1.6 L16.6 8 L12.6 8 Z" fill="#fde680" opacity="0.8"/></svg>
<div class="t" style="left:844.3px;top:112.4px;font-size:14.6px;line-height:18px;letter-spacing:0.074px;-webkit-text-stroke:0.3px #000;">Index</div>
<svg style="left:886px;top:104px;" width="32" height="32" viewBox="0 0 32 32"><path d="M21.6 21.8 L27.4 27.8" stroke="#5f88d4" stroke-width="6.4" stroke-linecap="round"/><path d="M21.6 21.6 L27.2 27.4" stroke="#8fb0ea" stroke-width="3.6" stroke-linecap="round"/><circle cx="12.8" cy="12.8" r="12.2" fill="#9aa0a8"/><circle cx="12.8" cy="12.8" r="11.6" fill="#dfe3e8"/><circle cx="12.8" cy="12.8" r="10" fill="#a4aab2"/><circle cx="12.8" cy="12.8" r="9.4" fill="url(#gLens)"/><path d="M12.2 0.6 L25.8 0.6 L19.2 8.4 L21.6 8.4 L8.6 17.4 L13.4 9.6 L10.8 9.6 Z" fill="#f8c41c" stroke="#e4a018" stroke-width="0.5"/><path d="M13.4 1.6 L22.6 1.6 L16.6 8 L12.6 8 Z" fill="#fde680" opacity="0.8"/></svg>
<div class="t" style="left:913.3px;top:112.4px;font-size:14.6px;line-height:18px;letter-spacing:-0.164px;-webkit-text-stroke:0.3px #000;">G.T</div>
<div style="left:969px;top:109px;width:249px;height:24px;background:#e1e1e1;border:1px solid #adadad;"></div>
<div class="t" style="left:973.2px;top:109.8px;font-size:16.8px;line-height:20px;letter-spacing:-0.535px;font-weight:bold;">Menu Principal</div>
<svg style="left:1196px;top:117.6px;" width="14" height="9" viewBox="0 0 14 9"><path d="M1.2 1.2 L7 7.2 L12.8 1.2" fill="none" stroke="#444" stroke-width="1.6"/></svg>
<svg style="left:1249px;top:106px;" width="31" height="31" viewBox="0 0 32 32"><circle cx="5.6" cy="13" r="3.6" fill="#8e8c88"/><path d="M0.8 26 Q0.8 17.4 5.6 17.4 Q10.4 17.4 10.4 26 Z" fill="#8e8c88"/><circle cx="26.4" cy="13" r="3.6" fill="#8e8c88"/><path d="M21.6 26 Q21.6 17.4 26.4 17.4 Q31.2 17.4 31.2 26 Z" fill="#8e8c88"/><path d="M16 1.2 Q22.4 1.2 22.4 8.4 Q22.4 12.6 19.6 15 Q19.2 19.6 24 21.4 L30.6 22.4 L30.6 30.6 L1.4 30.6 L1.4 22.4 L8 21.4 Q12.8 19.6 12.4 15 Q9.6 12.6 9.6 8.4 Q9.6 1.2 16 1.2 Z" fill="#5a8ae0" stroke="#4472cc" stroke-width="0.7"/><rect x="1.4" y="24.4" width="29.2" height="6.2" fill="#4f80d8"/><rect x="15.6" y="2" width="14" height="8.6" rx="1.6" fill="#f2f6fd" stroke="#a8c0e8" stroke-width="0.7"/><path d="M18.6 10.2 L17.8 13.4 L22 10.4 Z" fill="#f2f6fd"/><path d="M18 4.8 H27 M18 7.4 H25.4" stroke="#9ab4e0" stroke-width="1.1"/></svg>
<svg style="left:1296px;top:106px;" width="31" height="31" viewBox="0 0 32 32"><circle cx="16" cy="16" r="14.8" fill="url(#gHelp)" stroke="#3a62c4" stroke-width="1.2"/><ellipse cx="16" cy="9" rx="10.5" ry="6.5" fill="#ffffff" opacity="0.22"/><text x="16" y="25" text-anchor="middle" font-family="Liberation Sans,sans-serif" font-weight="bold" font-size="25" fill="#ffffff">?</text></svg>
<svg style="left:1342px;top:105px;" width="31" height="31" viewBox="0 0 32 32"><rect x="1.2" y="3.2" width="29.6" height="27.2" rx="2" fill="#fdfdfe" stroke="#b4bccb" stroke-width="1.2"/><path d="M1.2 5.2 Q1.2 3.2 3.2 3.2 L28.8 3.2 Q30.8 3.2 30.8 5.2 L30.8 9.6 L1.2 9.6 Z" fill="url(#gCalTop)"/><rect x="3" y="16.6" width="26" height="5" fill="#4f7fdc"/><path d="M3 12.4 H29 V26.2 H3 Z" fill="none" stroke="#c9c3bd" stroke-width="0.7"/><rect x="7.2" y="1.2" width="1.8" height="5.2" rx="0.9" fill="#4a5f8c"/><rect x="23" y="1.2" width="1.8" height="5.2" rx="0.9" fill="#4a5f8c"/><rect x="4.2" y="17.4" width="5" height="3.4" fill="#8fb4f0"/><rect x="4.2" y="22.8" width="5" height="2.8" fill="#e4e9f2"/><rect x="10.4" y="13" width="5" height="2.8" fill="#dcecc8"/><rect x="10.4" y="17.4" width="5" height="3.4" fill="#8fb4f0"/><rect x="10.4" y="22.8" width="5" height="2.8" fill="#e4e9f2"/><rect x="16.6" y="13" width="5" height="2.8" fill="#dcecc8"/><rect x="16.6" y="17.4" width="5" height="3.4" fill="#8fb4f0"/><rect x="16.6" y="22.8" width="5" height="2.8" fill="#e4e9f2"/><rect x="22.8" y="13" width="5" height="2.8" fill="#e8eef8"/><rect x="22.8" y="17.4" width="5" height="3.4" fill="#8fb4f0"/><rect x="22.8" y="22.8" width="5" height="2.8" fill="#e4e9f2"/></svg>
<div style="left:639px;top:183px;width:1292.4px;height:861.6px;background:#d9e4f2;border:1.5px solid #54575c;border-radius:9px 9px 0 0;box-shadow:inset 0 0 0 1.2px rgba(246,249,255,0.85);"></div>
<div style="left:640px;top:184px;width:1290.4px;height:43px;background:linear-gradient(180deg,#c3d1e0 0,#cad7e6 50%,#dae5f3 100%);border-radius:8px 8px 0 0;"></div>
<svg style="left:652px;top:198px;" width="22" height="22" viewBox="0 0 100 100"><circle cx="50" cy="50" r="47" fill="url(#gLogo)" stroke="#e6e6ea" stroke-width="2"/><path d="M81 73 C71 71 65 65 60 56 L46 30 Q41 22 36 30 L24 52 Q16 68 34 72 Q52 74 62 60" stroke="#ff8a08" stroke-width="12" fill="none" stroke-linecap="round" stroke-linejoin="round"/><circle cx="76" cy="56" r="9.5" fill="#050505"/></svg>
<div class="t" style="left:680.4px;top:199.3px;font-size:16.5px;line-height:22px;letter-spacing:-0.375px;color:#9aa3ad;">Gestion des Fonds</div>
<div style="left:1779px;top:196px;width:44px;height:25px;border:1px solid #a9b8cc;border-radius:3px;background:linear-gradient(180deg,#d6e0ee,#c9d6e7);"></div>
<div style="left:1826px;top:196px;width:44px;height:25px;border:1px solid #a9b8cc;border-radius:3px;background:linear-gradient(180deg,#d6e0ee,#c9d6e7);"></div>
<div style="left:1873px;top:196px;width:44px;height:25px;border:1px solid #a9b8cc;border-radius:3px;background:linear-gradient(180deg,#d6e0ee,#c9d6e7);"></div>
<svg style="left:1792px;top:206.4px;" width="18" height="9" viewBox="0 0 18 9"><rect x="1.5" y="1.5" width="14" height="5" rx="1.6" fill="#fdfdfd" stroke="#4a4f56" stroke-width="1.3"/></svg>
<svg style="left:1838px;top:200px;" width="18" height="16" viewBox="0 0 18 16"><rect x="2" y="2.5" width="14" height="11" rx="1.6" fill="#fdfdfd" stroke="#4a4f56" stroke-width="1.3"/><rect x="5.6" y="6.2" width="6.8" height="3.4" rx="0.8" fill="#dce6f4" stroke="#4a4f56" stroke-width="1.1"/></svg>
<svg style="left:1886px;top:201px;" width="18" height="14" viewBox="0 0 18 14"><path d="M3.6 2.6 L14.4 11.4 M14.4 2.6 L3.6 11.4" stroke="#4a4f56" stroke-width="4.6" stroke-linecap="round"/><path d="M3.6 2.6 L14.4 11.4 M14.4 2.6 L3.6 11.4" stroke="#fdfdfd" stroke-width="2.3" stroke-linecap="round"/></svg>
<div style="left:649px;top:226px;width:1271px;height:808.4px;background:#fff;"></div>
<svg style="left:661px;top:237px;" width="32" height="32" viewBox="0 0 32 32"><circle cx="15.5" cy="16" r="14.6" fill="url(#gGreen)" stroke="#86b52c" stroke-width="1"/><path d="M12.9 7.4 H18.1 V13.4 H24.1 V18.6 H18.1 V24.6 H12.9 V18.6 H6.9 V13.4 H12.9 Z" fill="#fff" stroke="#f2f9dc" stroke-width="0.9" stroke-linejoin="round"/></svg>
<svg style="left:704px;top:236px;" width="32" height="32" viewBox="0 0 32 32"><path d="M21.6 21.8 L27.4 27.8" stroke="#5f88d4" stroke-width="6.4" stroke-linecap="round"/><path d="M21.6 21.6 L27.2 27.4" stroke="#8fb0ea" stroke-width="3.6" stroke-linecap="round"/><circle cx="12.8" cy="12.8" r="12.2" fill="#9aa0a8"/><circle cx="12.8" cy="12.8" r="11.6" fill="#dfe3e8"/><circle cx="12.8" cy="12.8" r="10" fill="#a4aab2"/><circle cx="12.8" cy="12.8" r="9.4" fill="url(#gLens)"/><path d="M12.2 0.6 L25.8 0.6 L19.2 8.4 L21.6 8.4 L8.6 17.4 L13.4 9.6 L10.8 9.6 Z" fill="#f8c41c" stroke="#e4a018" stroke-width="0.5"/><path d="M13.4 1.6 L22.6 1.6 L16.6 8 L12.6 8 Z" fill="#fde680" opacity="0.8"/></svg>
<svg style="left:742px;top:236px;" width="32" height="32" viewBox="0 0 32 32"><path d="M21.6 21.8 L27.4 27.8" stroke="#5f88d4" stroke-width="6.4" stroke-linecap="round"/><path d="M21.6 21.6 L27.2 27.4" stroke="#8fb0ea" stroke-width="3.6" stroke-linecap="round"/><circle cx="12.8" cy="12.8" r="12.2" fill="#9aa0a8"/><circle cx="12.8" cy="12.8" r="11.6" fill="#dfe3e8"/><circle cx="12.8" cy="12.8" r="10" fill="#a4aab2"/><circle cx="12.8" cy="12.8" r="9.4" fill="url(#gLens)"/></svg>
<svg style="left:783px;top:236px;" width="32" height="32" viewBox="0 0 32 32"><path d="M21.6 21.8 L27.4 27.8" stroke="#5f88d4" stroke-width="6.4" stroke-linecap="round"/><path d="M21.6 21.6 L27.2 27.4" stroke="#8fb0ea" stroke-width="3.6" stroke-linecap="round"/><circle cx="12.8" cy="12.8" r="12.2" fill="#9aa0a8"/><circle cx="12.8" cy="12.8" r="11.6" fill="#dfe3e8"/><circle cx="12.8" cy="12.8" r="10" fill="#a4aab2"/><circle cx="12.8" cy="12.8" r="9.4" fill="url(#gLens)"/><text x="5.4" y="18.6" font-family="Liberation Serif,serif" font-weight="bold" font-size="18" fill="#1f3a46" letter-spacing="-1.6">GT</text></svg>
<svg style="left:826px;top:238px;" width="32" height="32" viewBox="0 0 32 32"><rect x="1.2" y="3.2" width="29.6" height="27.2" rx="2" fill="#fdfdfe" stroke="#b4bccb" stroke-width="1.2"/><path d="M1.2 5.2 Q1.2 3.2 3.2 3.2 L28.8 3.2 Q30.8 3.2 30.8 5.2 L30.8 9.6 L1.2 9.6 Z" fill="url(#gCalTop)"/><rect x="3" y="16.6" width="26" height="5" fill="#4f7fdc"/><path d="M3 12.4 H29 V26.2 H3 Z" fill="none" stroke="#c9c3bd" stroke-width="0.7"/><rect x="7.2" y="1.2" width="1.8" height="5.2" rx="0.9" fill="#4a5f8c"/><rect x="23" y="1.2" width="1.8" height="5.2" rx="0.9" fill="#4a5f8c"/><rect x="4.2" y="17.4" width="5" height="3.4" fill="#8fb4f0"/><rect x="4.2" y="22.8" width="5" height="2.8" fill="#e4e9f2"/><rect x="10.4" y="13" width="5" height="2.8" fill="#dcecc8"/><rect x="10.4" y="17.4" width="5" height="3.4" fill="#8fb4f0"/><rect x="10.4" y="22.8" width="5" height="2.8" fill="#e4e9f2"/><rect x="16.6" y="13" width="5" height="2.8" fill="#dcecc8"/><rect x="16.6" y="17.4" width="5" height="3.4" fill="#8fb4f0"/><rect x="16.6" y="22.8" width="5" height="2.8" fill="#e4e9f2"/><rect x="22.8" y="13" width="5" height="2.8" fill="#e8eef8"/><rect x="22.8" y="17.4" width="5" height="3.4" fill="#8fb4f0"/><rect x="22.8" y="22.8" width="5" height="2.8" fill="#e4e9f2"/></svg>
<svg style="left:871px;top:236px;" width="32" height="32" viewBox="0 0 32 32"><defs><linearGradient id="gTr2" x1="0" x2="1"><stop offset="0" stop-color="#b4bac8"/><stop offset="0.35" stop-color="#e6e9f2"/><stop offset="0.7" stop-color="#d4d8e6"/><stop offset="1" stop-color="#a8aebc"/></linearGradient></defs><path d="M5 8 L6 28.5 Q6 30.5 8.5 30.5 L23.5 30.5 Q26 30.5 26 28.5 L27 8 Z" fill="url(#gTr2)" stroke="#9aa0ae" stroke-width="0.8"/><rect x="5.6" y="27.6" width="20.8" height="1.6" fill="#8e94a2" opacity="0.7"/><path d="M9 5 Q16 0.5 23 5" fill="#b8bcc4" stroke="#7a8088" stroke-width="0.8"/><rect x="3" y="4.6" width="26" height="4.6" rx="1.6" fill="#d4d7dd" stroke="#7f858e" stroke-width="0.9"/><path d="M3.6 8 H28.4" stroke="#8a9098" stroke-width="1"/><path d="M13.2 16.2 L16 12.6 L18.8 16.2 M20.6 19 L21.6 22.6 L17.6 23.4 M14.4 23.4 L10.4 22.6 L11.4 19" fill="none" stroke="#6a8ad8" stroke-width="2.6" stroke-linejoin="round" stroke-linecap="round"/></svg>
<svg style="left:912px;top:237px;" width="32" height="32" viewBox="0 0 32 32"><path d="M9 2 L21 2 L25 6 L25 18 L9 18 Z" fill="#f6f8fb" stroke="#aab2bd" stroke-width="0.9"/><path d="M11 6.5 H19 M11 9.5 H22 M11 12.5 H22" stroke="#5bb0d8" stroke-width="1.4"/><path d="M21 2 L21 6 L25 6" fill="#dfe4ea" stroke="#aab2bd" stroke-width="0.8"/><path d="M2.5 15 L6 13 L6 17 L26 17 L26 13 L29.5 15 L29.5 30 L2.5 30 Z" fill="#d9bea2" stroke="#9a7a5c" stroke-width="1"/><rect x="5" y="19" width="22" height="9.5" rx="0.8" fill="#f0e0cc" stroke="#a98a6c" stroke-width="0.8"/><rect x="11" y="22" width="10" height="3.6" rx="1.4" fill="#c9cdd2" stroke="#7f858c" stroke-width="0.8"/></svg>
<svg style="left:953px;top:236px;" width="32" height="32" viewBox="0 0 32 32"><path d="M11 1.5 L21 12 L16 12 L16 30 L6 30 L6 12 L1 12 Z" fill="url(#gArrowG)" stroke="#6ea022" stroke-width="1"/><rect x="16.5" y="17" width="14" height="13.5" rx="1" fill="#3c444c" stroke="#2a3036" stroke-width="0.8"/><rect x="19" y="17.5" width="9" height="6" fill="#a9d69a"/><rect x="20" y="25.5" width="7" height="5" fill="#cfd4da"/><path d="M22 20 L29 27 L26 30 L31 30.5 L30.5 25.5 L29 27" fill="#3fae3a" stroke="#2a8a28" stroke-width="0.6"/></svg>
<svg style="left:997.6px;top:241.4px;" width="31" height="22.32" viewBox="0 0 32 23"><path d="M1.2 11.8 Q8.5 2 16.5 2 Q24.5 2 30.8 11.8 Q24 21 16 21 Q8 21 1.2 11.8 Z" fill="#fdfdfd" stroke="#a8482a" stroke-width="2" stroke-linejoin="round"/><path d="M2 10.6 Q9 1.4 17.5 2" stroke="#5a2412" stroke-width="1.3" fill="none"/><circle cx="16.4" cy="11.4" r="7.2" fill="#3f8fae"/><path d="M10.4 14.6 Q12 19 17.6 18.4 Q22.6 17.4 23.4 12.6 Q21 16.4 16.4 16.4 Q12.6 16.4 10.4 14.6 Z" fill="#a8dcec"/><circle cx="16.4" cy="10.8" r="4.2" fill="#1f5f7c"/><circle cx="16.4" cy="10.6" r="2.4" fill="#0a2230"/><path d="M11 7.6 Q16 3.8 22 7.4" stroke="#7fc4dc" stroke-width="1.4" fill="none"/></svg>
<svg style="left:1041px;top:236px;" width="32" height="32" viewBox="0 0 32 32"><path d="M8.5 1.5 H23.5 V11 H8.5 Z" fill="#fafbfc" stroke="#b4bac2" stroke-width="1"/><rect x="2" y="9" width="28" height="14.5" rx="3" fill="#dfe3e8" stroke="#8f969f" stroke-width="1"/><rect x="6" y="10" width="20" height="7.2" rx="0.8" fill="#1fb4bc" stroke="#15929a" stroke-width="0.7"/><rect x="6" y="10" width="20" height="2.6" fill="#4ed0d6"/><path d="M8 20.5 H24 V30.5 H8 Z" fill="#f4f5f7" stroke="#9aa1aa" stroke-width="1"/><path d="M10.5 24 H21.5 M10.5 26.8 H21.5" stroke="#9aa1aa" stroke-width="1.2"/><circle cx="27" cy="19.5" r="0.9" fill="#7ab648"/></svg>
<svg style="left:1086px;top:235px;" width="35" height="35" viewBox="0 0 34 34"><text x="2" y="12.5" font-family="Liberation Sans,sans-serif" font-weight="bold" font-size="13.5" letter-spacing="-0.6"><tspan fill="#333b46">A</tspan><tspan fill="#3465c8">B</tspan></text><text x="14" y="32" font-family="Liberation Sans,sans-serif" font-weight="bold" font-size="13.5" letter-spacing="-0.6"><tspan fill="#333b46">A</tspan><tspan fill="#d03a3a">C</tspan></text><path d="M5 15 Q4.5 23 11 24.5 L11 21.5 L16 26 L11 30 L11 27.5 Q2 26 5 15 Z" fill="#5f88d8" stroke="#3f68b8" stroke-width="0.6"/></svg>
<svg style="left:1132px;top:236px;" width="32" height="32" viewBox="0 0 32 32"><circle cx="16" cy="16" r="14.8" fill="url(#gRed)" stroke="#c23c30" stroke-width="1"/><path d="M11.2 11.2 L20.8 20.8 M20.8 11.2 L11.2 20.8" stroke="#fff" stroke-width="4.4" stroke-linecap="butt"/></svg>
<svg style="left:1213px;top:236px;" width="32" height="32" viewBox="0 0 32 32"><defs><linearGradient id="gB1" x1="0" x2="1"><stop offset="0" stop-color="#f47a7a"/><stop offset="1" stop-color="#d83a3a"/></linearGradient><linearGradient id="gB2" x1="0" x2="1"><stop offset="0" stop-color="#c4ea6a"/><stop offset="1" stop-color="#8fc42a"/></linearGradient><linearGradient id="gB3" x1="0" x2="1"><stop offset="0" stop-color="#c4ecfa"/><stop offset="1" stop-color="#7fc8ea"/></linearGradient></defs><rect x="1.5" y="8" width="8.6" height="22.5" rx="1.6" fill="url(#gB1)" stroke="#d85050" stroke-width="0.6"/><rect x="11.5" y="14.5" width="8.6" height="16" rx="1.6" fill="url(#gB2)" stroke="#96c43a" stroke-width="0.6"/><rect x="21.5" y="2" width="8.6" height="28.5" rx="1.6" fill="url(#gB3)" stroke="#86c4e0" stroke-width="0.6"/></svg>
<svg style="left:1256px;top:236px;" width="32" height="32" viewBox="0 0 32 32"><text x="12" y="25" font-family="Liberation Sans,sans-serif" font-weight="bold" font-size="31" fill="#7f8fd0" stroke="#7584c6" stroke-width="1.5">?</text><circle cx="7.5" cy="10" r="3.4" fill="#e04848"/><path d="M4.5 15 H10 V24 Q10 26 13 27.5 V30 H2 V27.5 Q5.2 26 5.2 24 V17.5 H4.5 Z" fill="#e04848" stroke="#c83434" stroke-width="0.5"/></svg>
<svg style="left:1296px;top:238px;" width="32" height="32" viewBox="0 0 32 32"><path d="M4.5 1.5 H21 L27.5 8 V30.5 H4.5 Z" fill="#fcfdff" stroke="#8a929c" stroke-width="1.1"/><path d="M21 1.5 V8 H27.5" fill="#e4e8ee" stroke="#8a929c" stroke-width="1"/><path d="M8 10.5 H16" stroke="#7fa6e8" stroke-width="1.3"/><path d="M8 13.1 H24" stroke="#7fa6e8" stroke-width="1.3"/><path d="M8 15.7 H24" stroke="#7fa6e8" stroke-width="1.3"/><path d="M8 18.3 H24" stroke="#7fa6e8" stroke-width="1.3"/><path d="M8 20.9 H24" stroke="#7fa6e8" stroke-width="1.3"/><path d="M8 23.5 H24" stroke="#7fa6e8" stroke-width="1.3"/><path d="M8 26.1 H24" stroke="#7fa6e8" stroke-width="1.3"/></svg>
<svg style="left:1341px;top:238px;" width="32" height="32" viewBox="0 0 32 32"><circle cx="4.5" cy="4.5" r="2.5" fill="#22d0c8"/><path d="M10.5 2.9 H30 M10.5 6.3 H30" stroke="#5a5a5a" stroke-width="1.2" stroke-dasharray="7 1.6 5 1.4 6 1.2"/><circle cx="4.5" cy="12.1" r="2.5" fill="#22d0c8"/><path d="M10.5 10.5 H30 M10.5 13.9 H30" stroke="#5a5a5a" stroke-width="1.2" stroke-dasharray="8 1.6 7 1.4 6 1.2"/><circle cx="4.5" cy="19.7" r="2.5" fill="#22d0c8"/><path d="M10.5 18.099999999999998 H30 M10.5 21.5 H30" stroke="#5a5a5a" stroke-width="1.2" stroke-dasharray="9 1.6 9 1.4 6 1.2"/><circle cx="4.5" cy="27.299999999999997" r="2.5" fill="#22d0c8"/><path d="M10.5 25.699999999999996 H30 M10.5 29.099999999999998 H30" stroke="#5a5a5a" stroke-width="1.2" stroke-dasharray="10 1.6 11 1.4 6 1.2"/></svg>
<div style="left:1407.8px;top:240.8px;width:93px;height:25px;background:#e1e1e1;border:1px solid #adadad;"></div>
<div class="t" style="left:1412px;top:242.5px;font-size:15px;line-height:20px;letter-spacing:0.1px;">Série..</div>
<svg style="left:1480.6px;top:250.6px;" width="14" height="9" viewBox="0 0 14 9"><path d="M1.2 1.2 L7 7.2 L12.8 1.2" fill="none" stroke="#444" stroke-width="1.7"/></svg>
<div style="left:1509.8px;top:240.8px;width:103px;height:25px;background:#e1e1e1;border:1px solid #adadad;"></div>
<div class="t" style="left:1514px;top:242.5px;font-size:15px;line-height:20px;letter-spacing:0.1px;">Imprimer..</div>
<svg style="left:1592.6px;top:250.6px;" width="14" height="9" viewBox="0 0 14 9"><path d="M1.2 1.2 L7 7.2 L12.8 1.2" fill="none" stroke="#444" stroke-width="1.7"/></svg>
<div style="left:1622.8px;top:240.8px;width:103px;height:25px;background:#e1e1e1;border:1px solid #adadad;"></div>
<div class="t" style="left:1627px;top:242.5px;font-size:15px;line-height:20px;letter-spacing:0.1px;">Recher...</div>
<svg style="left:1705.6px;top:250.6px;" width="14" height="9" viewBox="0 0 14 9"><path d="M1.2 1.2 L7 7.2 L12.8 1.2" fill="none" stroke="#444" stroke-width="1.7"/></svg>
<div style="left:1747px;top:240.4px;width:138px;height:26.2px;background:#fff;border:2px solid #7a7a7a;border-right:1px solid #b8b8b8;border-bottom:1px solid #b8b8b8;"></div>
<div class="t" style="left:1788px;top:241.5px;font-size:15px;line-height:20px;letter-spacing:0.1px;">286/286</div>
<div style="left:1892px;top:226px;width:5.2px;height:53px;background:#fbfb12;"></div>
<div style="left:1897px;top:228px;width:22.8px;height:783px;background:#f0f0f0;"></div>
<div style="left:1898.5px;top:250px;width:20px;height:60px;background:#cdcdcd;"></div>
<svg style="left:1901px;top:234px;" width="13" height="9" viewBox="0 0 13 9"><path d="M1.5 7.5 L6.5 2.2 L11.5 7.5" fill="none" stroke="#404040" stroke-width="2.2"/></svg>
<svg style="left:1901px;top:994px;" width="13" height="9" viewBox="0 0 13 9"><path d="M1.5 1.5 L6.5 6.8 L11.5 1.5" fill="none" stroke="#404040" stroke-width="2.2"/></svg>
<div style="left:649px;top:278px;width:1247px;height:3px;background:linear-gradient(180deg,#c8c8c8,#9a9a9a);"></div>
<div style="left:651px;top:281px;width:1244px;height:28px;background:linear-gradient(180deg,#e6e6e6 0,#f4f4f4 40%,#fff 75%,#fff 100%);"></div>
<div style="left:651px;top:308.3px;width:1244px;height:1.4px;background:#a8a8a8;"></div>
<div style="left:649.8px;top:281px;width:1.7px;height:729.4px;background:#b2b2b2;"></div>
<div class="t" style="left:712px;top:285px;font-size:17px;line-height:20px;letter-spacing:0.1px;">Cote</div>
<div class="t" style="left:1149px;top:285px;font-size:17px;line-height:20px;letter-spacing:0.1px;">Entité versante/Série/Sous-série</div>
<div class="t" style="left:1770px;top:284px;font-size:17px;line-height:20px;letter-spacing:0.1px;">Période</div>
<div style="left:651.5px;top:309.85px;width:1243.5px;height:700.2px;background:#f0f0f0;"></div>
<div style="left:651.5px;top:337.82500000000005px;width:1243.5px;height:1.3px;background:#dcdcdc;"></div>
<div class="t" style="left:653.4px;top:313.25px;font-size:12.5px;font-weight:bold;line-height:20px;letter-spacing:-0.9px;color:#222;">-*</div>
<div class="t" style="left:672px;top:314.55px;font-size:17px;line-height:20px;letter-spacing:0px;transform:scaleX(0.8997);transform-origin:0 0;">GG</div>
<div style="left:813.4px;top:313.95000000000005px;width:921px;height:21px;overflow:hidden;"><div class="cell" style="left:0;top:0.6px;letter-spacing:0.249px;">Registres paroissiaux</div></div>
<div class="cell" style="left:1735px;top:315.55px;width:132px;text-align:center;letter-spacing:0.04px;">1631 - 1792</div>
<div style="left:651.5px;top:367.00000000000006px;width:1243.5px;height:1.3px;background:#dcdcdc;"></div>
<div class="t" style="left:653.8px;top:342.425px;font-size:12.5px;font-weight:bold;line-height:20px;letter-spacing:-0.9px;color:#222;">*</div>
<div class="t" style="left:672px;top:343.725px;font-size:17px;line-height:20px;letter-spacing:0px;transform:scaleX(0.8680);transform-origin:0 0;">1AV</div>
<div style="left:813.4px;top:343.12500000000006px;width:921px;height:21px;overflow:hidden;"><div class="cell" style="left:0;top:0.6px;letter-spacing:0.1px;">Audiovisuel -&gt; Collecte série d&#x27;émissions</div></div>
<div class="cell" style="left:1735px;top:344.725px;width:132px;text-align:center;letter-spacing:0.04px;">2002 - &lt;&lt;&lt;&lt;</div>
<div style="left:651.5px;top:396.17500000000007px;width:1243.5px;height:1.3px;background:#dcdcdc;"></div>
<div class="t" style="left:672px;top:372.90000000000003px;font-size:17px;line-height:20px;letter-spacing:0px;transform:scaleX(0.8680);transform-origin:0 0;">2AV</div>
<div class="cell" style="left:1735px;top:373.90000000000003px;width:132px;text-align:center;letter-spacing:0.04px;">S D</div>
<div style="left:651.5px;top:425.35px;width:1243.5px;height:1.3px;background:#dcdcdc;"></div>
<div class="t" style="left:672px;top:402.075px;font-size:17px;line-height:20px;letter-spacing:0px;transform:scaleX(0.8680);transform-origin:0 0;">3AV</div>
<div class="cell" style="left:1735px;top:403.075px;width:132px;text-align:center;letter-spacing:0.04px;">S D</div>
<div style="left:651.5px;top:454.52500000000003px;width:1243.5px;height:1.3px;background:#dcdcdc;"></div>
<div class="t" style="left:653.8px;top:429.95px;font-size:12.5px;font-weight:bold;line-height:20px;letter-spacing:-0.9px;color:#222;">*</div>
<div class="cell" style="left:671.5px;top:431.25px;">1C</div>
<div style="left:813.4px;top:430.65000000000003px;width:921px;height:21px;overflow:hidden;"><div class="cell" style="left:0;top:0.6px;letter-spacing:0.048px;">Bibliothèque Administrative et Historique, Périodiques, Documentation -&gt; Bibliothèque Administrative</div></div>
<div class="cell" style="left:1735px;top:432.25px;width:132px;text-align:center;letter-spacing:0.04px;">1900 - 2001</div>
<div style="left:651.5px;top:483.70000000000005px;width:1243.5px;height:1.3px;background:#dcdcdc;"></div>
<div class="t" style="left:653.4px;top:459.125px;font-size:12.5px;font-weight:bold;line-height:20px;letter-spacing:-0.9px;color:#222;">-*</div>
<div class="cell" style="left:671.5px;top:460.425px;">2C</div>
<div style="left:813.4px;top:459.82500000000005px;width:921px;height:21px;overflow:hidden;"><div class="cell" style="left:0;top:0.6px;letter-spacing:0.08px;">Bibliothèque Administrative et Historique, Périodiques, Documentation -&gt; Bibliothèque Historique</div></div>
<div class="cell" style="left:1735px;top:461.425px;width:132px;text-align:center;letter-spacing:0.04px;">S D</div>
<div style="left:651.5px;top:512.875px;width:1243.5px;height:1.3px;background:#dcdcdc;"></div>
<div class="t" style="left:653.4px;top:488.3px;font-size:12.5px;font-weight:bold;line-height:20px;letter-spacing:-0.9px;color:#222;">-*</div>
<div class="cell" style="left:671.5px;top:489.6px;">3C</div>
<div style="left:813.4px;top:489.00000000000006px;width:921px;height:21px;overflow:hidden;"><div class="cell" style="left:0;top:0.6px;letter-spacing:0.078px;">Bibliothèque Administrative et Historique, Périodiques, Documentation -&gt; Périodiques</div></div>
<div class="cell" style="left:1735px;top:490.6px;width:132px;text-align:center;letter-spacing:0.04px;">1772 - 2017</div>
<div style="left:651.5px;top:542.05px;width:1243.5px;height:1.3px;background:#dcdcdc;"></div>
<div class="t" style="left:653.4px;top:517.475px;font-size:12.5px;font-weight:bold;line-height:20px;letter-spacing:-0.9px;color:#222;">-*</div>
<div class="cell" style="left:671.5px;top:518.7750000000001px;">4C</div>
<div style="left:813.4px;top:518.1750000000001px;width:921px;height:21px;overflow:hidden;"><div class="cell" style="left:0;top:0.6px;letter-spacing:0.072px;">Bibliothèque Administrative et Historique, Périodiques, Documentation -&gt; Revues de presse</div></div>
<div class="cell" style="left:1735px;top:519.7750000000001px;width:132px;text-align:center;letter-spacing:0.04px;">1870 - 2013</div>
<div style="left:651.5px;top:571.2249999999999px;width:1243.5px;height:1.3px;background:#dcdcdc;"></div>
<div class="t" style="left:653.4px;top:546.65px;font-size:12.5px;font-weight:bold;line-height:20px;letter-spacing:-0.9px;color:#222;">-</div>
<div class="cell" style="left:671.5px;top:547.95px;">5C</div>
<div style="left:813.4px;top:547.35px;width:901.8px;height:21px;overflow:hidden;"><div class="cell" style="left:0;top:0.6px;letter-spacing:0.115px;">Bibliothèque Administrative et Historique, Périodiques, Documentation -&gt; rapports administratifs, mémoires universitaires</div></div>
<div class="cell" style="left:1735px;top:548.95px;width:132px;text-align:center;letter-spacing:0.04px;">1914 - 2021</div>
<div style="left:651.5px;top:600.3999999999999px;width:1243.5px;height:1.3px;background:#dcdcdc;"></div>
<div class="t" style="left:653.8px;top:575.8249999999999px;font-size:12.5px;font-weight:bold;line-height:20px;letter-spacing:-0.9px;color:#222;">*</div>
<div class="cell" style="left:671.5px;top:577.125px;">6C</div>
<div style="left:813.4px;top:576.525px;width:921px;height:21px;overflow:hidden;"><div class="cell" style="left:0;top:0.6px;letter-spacing:0.055px;">Bibliothèque Administrative et Historique, Périodiques, Documentation -&gt; Publications de la ville</div></div>
<div class="cell" style="left:1735px;top:578.125px;width:132px;text-align:center;letter-spacing:0.04px;">1926 - 2019</div>
<div style="left:651.5px;top:629.5749999999999px;width:1243.5px;height:1.3px;background:#dcdcdc;"></div>
<div class="cell" style="left:671.5px;top:606.3000000000001px;">7C</div>
<div style="left:813.4px;top:605.7px;width:921px;height:21px;overflow:hidden;"><div class="cell" style="left:0;top:0.6px;letter-spacing:0.059px;">Bibliothèque Administrative et Historique, Périodiques, Documentation -&gt; contributions à ouvrages collectifs en 2C</div></div>
<div class="cell" style="left:1735px;top:607.3000000000001px;width:132px;text-align:center;letter-spacing:0.04px;">1864 - 2005</div>
<div style="left:651.5px;top:658.75px;width:1243.5px;height:1.3px;background:#dcdcdc;"></div>
<div class="cell" style="left:671.5px;top:635.4750000000001px;">548C</div>
<div style="left:813.4px;top:634.8750000000001px;width:921px;height:21px;overflow:hidden;"><div class="cell" style="left:0;top:0.6px;letter-spacing:0.055px;">Bibliothèque Administrative et Historique, Périodiques, Documentation -&gt;</div></div>
<div class="cell" style="left:1735px;top:636.4750000000001px;width:132px;text-align:center;letter-spacing:0.04px;">S D</div>
<div style="left:651.5px;top:687.925px;width:1243.5px;height:1.3px;background:#dcdcdc;"></div>
<div class="t" style="left:653.4px;top:663.35px;font-size:12.5px;font-weight:bold;line-height:20px;letter-spacing:-0.9px;color:#222;">-*</div>
<div class="cell" style="left:671.5px;top:664.6500000000001px;">1D</div>
<div style="left:813.4px;top:664.0500000000001px;width:921px;height:21px;overflow:hidden;"><div class="cell" style="left:0;top:0.6px;letter-spacing:0.107px;">Administration générale de la commune -&gt; Conseil Municipal</div></div>
<div class="cell" style="left:1735px;top:665.6500000000001px;width:132px;text-align:center;letter-spacing:0.04px;">1790 - 2017</div>
<div style="left:651.5px;top:717.0999999999999px;width:1243.5px;height:1.3px;background:#dcdcdc;"></div>
<div class="t" style="left:653.4px;top:692.525px;font-size:12.5px;font-weight:bold;line-height:20px;letter-spacing:-0.9px;color:#222;">-*</div>
<div class="cell" style="left:671.5px;top:693.825px;">2D</div>
<div style="left:813.4px;top:693.225px;width:921px;height:21px;overflow:hidden;"><div class="cell" style="left:0;top:0.6px;letter-spacing:0.108px;">Administration générale de la commune -&gt; Actes de l&#x27;administration municipale</div></div>
<div class="cell" style="left:1735px;top:694.825px;width:132px;text-align:center;letter-spacing:0.04px;">1826 - 1978</div>
<div style="left:651.5px;top:746.2749999999999px;width:1243.5px;height:1.3px;background:#dcdcdc;"></div>
<div class="t" style="left:653.4px;top:721.6999999999999px;font-size:12.5px;font-weight:bold;line-height:20px;letter-spacing:-0.9px;color:#222;">-*</div>
<div class="cell" style="left:671.5px;top:723.0px;">4D</div>
<div style="left:813.4px;top:722.4px;width:921px;height:21px;overflow:hidden;"><div class="cell" style="left:0;top:0.6px;letter-spacing:0.072px;">Administration générale de la commune -&gt; Contentieux</div></div>
<div class="cell" style="left:1735px;top:724.0px;width:132px;text-align:center;letter-spacing:0.04px;">1826 - 1979</div>
<div style="left:651.5px;top:775.4499999999999px;width:1243.5px;height:1.3px;background:#dcdcdc;"></div>
<div class="t" style="left:653.4px;top:750.875px;font-size:12.5px;font-weight:bold;line-height:20px;letter-spacing:-0.9px;color:#222;">-*</div>
<div class="cell" style="left:671.5px;top:752.1750000000001px;">5D</div>
<div style="left:813.4px;top:751.575px;width:921px;height:21px;overflow:hidden;"><div class="cell" style="left:0;top:0.6px;letter-spacing:0.105px;">Administration générale de la commune -&gt; Assurances</div></div>
<div class="cell" style="left:1735px;top:753.1750000000001px;width:132px;text-align:center;letter-spacing:0.04px;">1898 - 1980</div>
<div style="left:651.5px;top:804.625px;width:1243.5px;height:1.3px;background:#dcdcdc;"></div>
<div class="t" style="left:653.4px;top:780.0500000000001px;font-size:12.5px;font-weight:bold;line-height:20px;letter-spacing:-0.9px;color:#222;">-*</div>
<div class="cell" style="left:671.5px;top:781.3500000000001px;">3D</div>
<div style="left:813.4px;top:780.7500000000001px;width:921px;height:21px;overflow:hidden;"><div class="cell" style="left:0;top:0.6px;letter-spacing:0.11px;">Administration générale de la commune -&gt; Administration de la commune</div></div>
<div class="cell" style="left:1735px;top:782.3500000000001px;width:132px;text-align:center;letter-spacing:0.04px;">1720 - 2012</div>
<div style="left:651.5px;top:833.8px;width:1243.5px;height:1.3px;background:#dcdcdc;"></div>
<div class="t" style="left:653.4px;top:809.225px;font-size:12.5px;font-weight:bold;line-height:20px;letter-spacing:-0.9px;color:#222;">-*</div>
<div class="cell" style="left:671.5px;top:810.5250000000001px;">1E</div>
<div style="left:813.4px;top:809.9250000000001px;width:921px;height:21px;overflow:hidden;"><div class="cell" style="left:0;top:0.6px;letter-spacing:-0.305px;">Etat civil -&gt; Etat civil</div></div>
<div class="cell" style="left:1735px;top:811.5250000000001px;width:132px;text-align:center;letter-spacing:0.04px;">1793 - 1921</div>
<div style="left:651.5px;top:862.9749999999999px;width:1243.5px;height:1.3px;background:#dcdcdc;"></div>
<div class="t" style="left:653.4px;top:838.4px;font-size:12.5px;font-weight:bold;line-height:20px;letter-spacing:-0.9px;color:#222;">-*</div>
<div class="cell" style="left:671.5px;top:839.7px;">2E</div>
<div style="left:813.4px;top:839.1px;width:921px;height:21px;overflow:hidden;"><div class="cell" style="left:0;top:0.6px;letter-spacing:-0.042px;">Etat civil -&gt; Naturalisations</div></div>
<div class="cell" style="left:1735px;top:840.7px;width:132px;text-align:center;letter-spacing:0.04px;">1927 - 1978</div>
<div style="left:651.5px;top:892.15px;width:1243.5px;height:1.3px;background:#dcdcdc;"></div>
<div class="cell" style="left:671.5px;top:868.8750000000001px;">1107E</div>
<div style="left:813.4px;top:868.2750000000001px;width:921px;height:21px;overflow:hidden;"><div class="cell" style="left:0;top:0.6px;letter-spacing:-0.367px;">Etat civil -&gt;</div></div>
<div class="cell" style="left:1735px;top:869.8750000000001px;width:132px;text-align:center;letter-spacing:0.04px;">S D</div>
<div style="left:651.5px;top:921.3249999999999px;width:1243.5px;height:1.3px;background:#dcdcdc;"></div>
<div class="cell" style="left:671.5px;top:898.0500000000001px;">1109E</div>
<div style="left:813.4px;top:897.45px;width:921px;height:21px;overflow:hidden;"><div class="cell" style="left:0;top:0.6px;letter-spacing:-0.367px;">Etat civil -&gt;</div></div>
<div class="cell" style="left:1735px;top:899.0500000000001px;width:132px;text-align:center;letter-spacing:0.04px;">1920</div>
<div style="left:651.5px;top:950.5px;width:1243.5px;height:1.3px;background:#dcdcdc;"></div>
<div class="cell" style="left:671.5px;top:927.2250000000001px;">1110-111-112E</div>
<div style="left:813.4px;top:926.6250000000001px;width:921px;height:21px;overflow:hidden;"><div class="cell" style="left:0;top:0.6px;letter-spacing:-0.367px;">Etat civil -&gt;</div></div>
<div class="cell" style="left:1735px;top:928.2250000000001px;width:132px;text-align:center;letter-spacing:0.04px;">S D</div>
<div style="left:651.5px;top:979.675px;width:1243.5px;height:1.3px;background:#dcdcdc;"></div>
<div class="t" style="left:653.4px;top:955.1px;font-size:12.5px;font-weight:bold;line-height:20px;letter-spacing:-0.9px;color:#222;">-*</div>
<div class="cell" style="left:671.5px;top:956.4000000000001px;">1F</div>
<div style="left:813.4px;top:955.8000000000001px;width:921px;height:21px;overflow:hidden;"><div class="cell" style="left:0;top:0.6px;letter-spacing:0.064px;">Population, Economie sociale, Statistique -&gt; Population</div></div>
<div class="cell" style="left:1735px;top:957.4000000000001px;width:132px;text-align:center;letter-spacing:0.04px;">1826 - 1946</div>
<div style="left:651.5px;top:1008.8499999999999px;width:1243.5px;height:1.3px;background:#dcdcdc;"></div>
<div class="t" style="left:653.4px;top:984.275px;font-size:12.5px;font-weight:bold;line-height:20px;letter-spacing:-0.9px;color:#222;">-*</div>
<div class="cell" style="left:671.5px;top:985.575px;">3F</div>
<div style="left:813.4px;top:984.975px;width:921px;height:21px;overflow:hidden;"><div class="cell" style="left:0;top:0.6px;letter-spacing:0.014px;">Population, Economie sociale, Statistique -&gt; Agriculture</div></div>
<div class="cell" style="left:1735px;top:986.575px;width:132px;text-align:center;letter-spacing:0.04px;">1929 - 1977</div>
<div style="left:810.3px;top:281px;width:1.8px;height:728.8000000000001px;background:#b6b6b6;"></div>
<div style="left:1734.3px;top:281px;width:1.8px;height:728.8000000000001px;background:#b6b6b6;"></div>
<div style="left:1866.6px;top:281px;width:1.8px;height:728.8000000000001px;background:#b6b6b6;"></div>
<div style="left:1894.8px;top:281px;width:1.2px;height:728.8000000000001px;background:#dcdcdc;"></div>
<div style="left:651px;top:1011px;width:1246px;height:23.2px;background:#f0f0f0;"></div>
<div style="left:1897px;top:1011px;width:23px;height:23.2px;background:#f0f0f0;"></div>
<svg style="left:655px;top:1016px;" width="9" height="13" viewBox="0 0 9 13"><path d="M7.5 1.5 L2 6.5 L7.5 11.5" fill="none" stroke="#c0c0c0" stroke-width="2"/></svg>
<svg style="left:1881px;top:1016px;" width="9" height="13" viewBox="0 0 9 13"><path d="M1.5 1.5 L7 6.5 L1.5 11.5" fill="none" stroke="#c0c0c0" stroke-width="2"/></svg>
<svg style="left:1904px;top:1020px;" width="13" height="13" viewBox="0 0 13 13"><rect x="9" y="1" width="2.4" height="2.4" fill="#b0b4ba"/><rect x="5" y="5" width="2.4" height="2.4" fill="#b0b4ba"/><rect x="9" y="5" width="2.4" height="2.4" fill="#b0b4ba"/><rect x="1" y="9" width="2.4" height="2.4" fill="#b0b4ba"/><rect x="5" y="9" width="2.4" height="2.4" fill="#b0b4ba"/><rect x="9" y="9" width="2.4" height="2.4" fill="#b0b4ba"/></svg>
<div style="left:708px;top:349.6px;width:594.4px;height:234.2px;background:linear-gradient(180deg,#8eafd2 0,#97b6d8 14px,#a8c4e2 30px,#b3cde9 42px,#c2d6ee 90px,#d0e0f2 140px,#d6e4f5 167px,#b0c9e6 168.5px,#b6ceea 200px,#bcd3ec 100%);border:1.8px solid #141414;border-radius:9px 9px 1px 1px;box-shadow:inset 0 0 0 1.2px rgba(255,255,255,0.4);"></div>
<div style="left:718.6px;top:392px;width:572.8px;height:181px;background:#fff;overflow:hidden;"><div style="left:-20px;top:92px;width:360px;height:44px;border-radius:50%;transform:rotate(10deg);background:rgba(228,234,249,0.62);filter:blur(10px);"></div><div style="left:300px;top:52px;width:300px;height:62px;border-radius:50%;transform:rotate(21deg);background:rgba(224,230,247,0.95);filter:blur(10px);"></div><div style="left:330px;top:76px;width:260px;height:10px;border-radius:50%;transform:rotate(21deg);background:rgba(255,255,255,0.9);filter:blur(4px);"></div></div>
<svg style="left:721.5px;top:364.5px;" width="21" height="21" viewBox="0 0 100 100"><circle cx="50" cy="50" r="47" fill="url(#gLogo)" stroke="#e6e6ea" stroke-width="2"/><path d="M81 73 C71 71 65 65 60 56 L46 30 Q41 22 36 30 L24 52 Q16 68 34 72 Q52 74 62 60" stroke="#ff8a08" stroke-width="12" fill="none" stroke-linecap="round" stroke-linejoin="round"/><circle cx="76" cy="56" r="9.5" fill="#050505"/></svg>
<div class="t" style="left:749.6px;top:366px;font-size:16.8px;line-height:22px;letter-spacing:-0.082px;">Question</div>
<div style="left:1244px;top:363.4px;width:44px;height:24.4px;border:1px solid #5a2a24;border-radius:3.5px;background:linear-gradient(180deg,#eab4a8 0,#dd8672 45%,#c8402a 52%,#d2583f 80%,#dc7a62 100%);box-shadow:0 0 0 1px rgba(255,255,255,0.45) inset;"></div>
<svg style="left:1257px;top:368.2px;" width="18" height="14" viewBox="0 0 18 14"><path d="M3 2.5 L15 11.5 M15 2.5 L3 11.5" stroke="#5a3a3a" stroke-width="4.6" stroke-linecap="square"/><path d="M3 2.5 L15 11.5 M15 2.5 L3 11.5" stroke="#fff" stroke-width="2.6" stroke-linecap="square"/></svg>
<svg style="left:729.5px;top:402.6px;" width="44.4" height="44.4" viewBox="0 0 32 32"><circle cx="16" cy="16" r="14.8" fill="url(#gHelp)" stroke="#3a62c4" stroke-width="1.2"/><ellipse cx="16" cy="9" rx="10.5" ry="6.5" fill="#ffffff" opacity="0.22"/><text x="16" y="25" text-anchor="middle" font-family="Liberation Sans,sans-serif" font-weight="bold" font-size="25" fill="#ffffff">?</text></svg>
<div class="t" style="left:831.6px;top:404px;font-size:15.2px;line-height:20px;letter-spacing:0.3px;color:#111;">Voulez-vous intégrer le Sommaire dans vos inventaires ?</div>
<div style="left:817.4px;top:523.2px;width:177.4px;height:35.2px;background:#e5f1fb;border:6.2px solid #ee1c25;"></div>
<div class="t" style="left:815.8px;top:529.6px;width:177.4px;text-align:center;font-weight:bold;font-size:17px;letter-spacing:-0.3px;line-height:20px;">Oui</div>
<div style="left:1047.6px;top:525.6px;width:168.6px;height:28.8px;background:#e1e1e1;border:1px solid #adadad;"></div>
<div class="t" style="left:1047.6px;top:529.8px;width:168.6px;text-align:center;font-size:17px;line-height:20px;">Non</div>
<div style="left:0px;top:1193.9px;width:2000px;height:56.1px;background:linear-gradient(90deg,#22333a 0,#21333a 900px,#23302f 1150px,#2a2927 1380px,#2e2826 1600px,#3a2c2a 1800px,#3a2e2c 2000px);"></div>
<div style="left:0px;top:1193.9px;width:66px;height:56.1px;background:#21323a;"></div>
<svg style="left:21.4px;top:1209.6px;" width="23" height="23" viewBox="0 0 24 24"><path d="M0 3.4 L10.4 1.9 V11.3 H0 Z M11.6 1.7 L24 0 V11.3 H11.6 Z M0 12.5 H10.4 V21.9 L0 20.5 Z M11.6 12.5 H24 V24 L11.6 22.2 Z" fill="#fff"/></svg>
<div style="left:66px;top:1193.9px;width:477px;height:56.1px;background:#f3f3f3;border-bottom:2px solid #c9c9c9;"></div>
<svg style="left:81px;top:1207px;" width="28" height="28" viewBox="0 0 28 28"><circle cx="17" cy="11" r="7" fill="none" stroke="#222" stroke-width="1.7"/><path d="M12 16 L2.5 25.5" stroke="#222" stroke-width="1.9"/></svg>
<div class="t" style="left:122.2px;top:1208px;font-size:20.2px;line-height:28px;letter-spacing:0.113px;color:#3b3b3b;">Taper ici pour rechercher</div>
<svg style="left:564px;top:1209px;" width="25" height="23" viewBox="0 0 25 23"><rect x="1.2" y="5.5" width="12.5" height="12" fill="none" stroke="#fff" stroke-width="1.6"/><path d="M1.2 3.5 V1 H13.7 V3.5 M1.2 19.5 V22 H13.7 V19.5" fill="none" stroke="#fff" stroke-width="1.6"/><rect x="18" y="6.5" width="4" height="4.6" fill="#fff"/><path d="M20 1 V4.5 M20 13.5 V22" stroke="#fff" stroke-width="1.6"/></svg>
<svg style="left:631px;top:1206px;" width="34" height="30" viewBox="0 0 34 30"><path d="M1 4 Q1 2.5 2.5 2.5 L12 2.5 L14.5 5.5 L31 5.5 Q32.5 5.5 32.5 7 V10 H1 Z" fill="#e8a825"/><rect x="1" y="6.8" width="31.5" height="20.2" rx="1.2" fill="#fbd45c"/><path d="M1 9.5 H32.5" stroke="#fce48a" stroke-width="1.6"/><path d="M6 27 V18.5 Q6 17 7.5 17 H26 Q27.5 17 27.5 18.5 V27 Z" fill="#3f8fe0"/><rect x="12" y="21.5" width="9.5" height="5.5" fill="#fbd45c"/></svg>
<svg style="left:698px;top:1203px;" width="35" height="35" viewBox="0 0 35 35"><defs><radialGradient id="gFx" cx="0.6" cy="0.2" r="0.95"><stop offset="0" stop-color="#ffe43a"/><stop offset="0.35" stop-color="#ff9a1a"/><stop offset="0.7" stop-color="#ff3d4a"/><stop offset="1" stop-color="#e0208a"/></radialGradient><radialGradient id="gFx2" cx="0.5" cy="0.4" r="0.6"><stop offset="0" stop-color="#9a5cf0"/><stop offset="1" stop-color="#5a2ac0"/></radialGradient></defs><path d="M17.5 34 C7 34 1.5 26.5 1.5 19 C1.5 14 3.5 10.5 5.5 8.5 C5.5 10.5 6.5 12 7.5 12.5 C8 9 10.5 5.5 14 4.5 C13.5 6.5 15 8.5 17 9 C19.5 4 22 2 23 0.5 C23.5 4 26.5 6 29.5 10 C32.5 14 33.5 17 33.5 20 C33.5 28 27 34 17.5 34 Z" fill="url(#gFx)"/><circle cx="17" cy="19.5" r="7.6" fill="url(#gFx2)"/><path d="M10 14.5 C13 11.5 18 12 20.5 14.5 C17.5 14 15.5 15.5 15 17.5 C14.5 20.5 17.5 22.5 20.5 21.5 C23.5 20.5 24 17.5 23 15.5 C26.5 18 26 24.5 21.5 27 C16 30 9 26.5 8.5 20 C8.4 17.8 9 16 10 14.5 Z" fill="#ff8a1a" opacity="0.95"/><path d="M20 6.5 Q24.5 9 25.5 14" stroke="#ffd23a" stroke-width="2.4" fill="none" opacity="0.8"/></svg>
<svg style="left:766px;top:1204px;" width="34" height="32" viewBox="0 0 34 32"><path d="M3 1.5 H30 V21 L23 29.5 H3 Z" fill="#edf6ea" stroke="#9ccc98" stroke-width="0.9"/><path d="M3 1.5 H30 V8 Q17 13 3 8 Z" fill="#c4e4bc"/><rect x="17" y="17.5" width="14.5" height="12" fill="#f8fbf6" stroke="#9ac496" stroke-width="0.9" transform="rotate(8 24 24)"/><path d="M19 20.5 H30 M19 23.6 H30 M19 26.8 H30" stroke="#a8d0a4" stroke-width="1.1" transform="rotate(8 24 24)"/><path d="M7.5 6.5 L12.4 6.5 L15.6 11.6 L19 6.5 L23.6 6.5 L17.8 14.6 L24 23.5 L19.2 23.5 L15.4 17.6 L11.6 23.5 L7 23.5 L13.2 14.6 Z" fill="#2a8a40" stroke="#1a6a2c" stroke-width="0.5"/></svg>
<svg style="left:834px;top:1203px;" width="34" height="33" viewBox="0 0 34 33"><rect x="2" y="2.5" width="30" height="28.5" rx="1.5" fill="#f4b63c" stroke="#d8922a" stroke-width="0.9"/><path d="M2 3.5 H32 V14 Q17 9 2 14 Z" fill="#fbd36a"/><path d="M10 21.5 L32 17 V30 Q32 31 31 31 H10 Z" fill="#fdf3dc" stroke="#e0b060" stroke-width="0.7"/><circle cx="25.5" cy="11.5" r="5" fill="#fdf6e6" stroke="#d8a040" stroke-width="0.9"/><path d="M25.5 8.5 V11.5 L27.6 13" stroke="#c48424" stroke-width="1.1" fill="none"/><ellipse cx="11.5" cy="13" rx="6.6" ry="8.2" fill="none" stroke="#e07810" stroke-width="4"/><ellipse cx="11.5" cy="13" rx="6.6" ry="8.2" fill="none" stroke="#f6a030" stroke-width="1.6"/></svg>
<div style="left:887px;top:1193.9px;width:66.5px;height:56.1px;background:#4a5d64;border-bottom:3px solid #8cc2ea;"></div>
<svg style="left:902.5px;top:1204.5px;" width="34" height="34" viewBox="0 0 100 100"><circle cx="50" cy="50" r="47" fill="url(#gLogo)" stroke="#e6e6ea" stroke-width="2"/><path d="M81 73 C71 71 65 65 60 56 L46 30 Q41 22 36 30 L24 52 Q16 68 34 72 Q52 74 62 60" stroke="#ff8a08" stroke-width="12" fill="none" stroke-linecap="round" stroke-linejoin="round"/><circle cx="76" cy="56" r="9.5" fill="#050505"/></svg>
<div style="left:1390.7px;top:1208.7px;width:25.6px;height:25.6px;border-radius:50%;background:radial-gradient(circle at 38% 32%,#ffe570 0,#fdc438 45%,#f6a020 100%);"></div>
<div class="t" style="left:1432.8px;top:1212px;font-size:18px;line-height:24px;letter-spacing:-0.54px;color:#fff;">19°C</div>
<div class="t" style="left:1484.8px;top:1212px;font-size:18px;line-height:24px;letter-spacing:0.173px;color:#fff;">Ensoleillé</div>
<svg style="left:1585px;top:1209px;" width="24" height="24" viewBox="0 0 24 24"><path d="M4 14 V10 Q4 3 11 3 Q18 3 18 9" fill="none" stroke="#e8e8e8" stroke-width="1.6"/><rect x="2.2" y="11" width="3.6" height="7" rx="1.4" fill="#e8e8e8"/><path d="M4 18 Q5 22 10 22" fill="none" stroke="#e8e8e8" stroke-width="1.2"/><path d="M9.5 10.5 L20.5 21.5 M20.5 10.5 L9.5 21.5" stroke="#e81828" stroke-width="3.2"/></svg>
<svg style="left:1616px;top:1209px;" width="26" height="25" viewBox="0 0 26 25"><path d="M1 13.5 Q2 2 13 2 Q24 2 25 13.5 Q22.5 10.5 19.5 13 Q16.5 10.5 13 13 Q9.5 10.5 6.5 13 Q3.5 10.5 1 13.5 Z" fill="#c44af0" stroke="#9a2ad0" stroke-width="0.7"/><path d="M13 2 Q9 6 9.5 12.5 M13 2 Q17 6 16.5 12.5 M13 2 V12" stroke="#f0c8ff" stroke-width="1.2" fill="none"/><path d="M13 12.5 V21.5" stroke="#cfd2d6" stroke-width="1.6"/><path d="M10.5 22.5 H15.5" stroke="#9aa0a6" stroke-width="2"/></svg>
<svg style="left:1651px;top:1208px;" width="22" height="25" viewBox="0 0 22 25"><path d="M1.5 1.5 H18.5 V14 Q18.5 19 10 23.5 Q1.5 19 1.5 14 Z" fill="#e9c94a" stroke="#b8962a" stroke-width="0.9"/><path d="M5.5 2 V18 M10 2 V21 M14.5 2 V18" stroke="#fdf0b0" stroke-width="1.6"/><circle cx="16" cy="19.5" r="4.6" fill="#1fc02a" stroke="#0e8a18" stroke-width="0.8"/></svg>
<svg style="left:1683px;top:1211px;" width="25" height="22" viewBox="0 0 25 22"><rect x="7.5" y="2" width="15.5" height="12" fill="none" stroke="#fff" stroke-width="1.6"/><path d="M15 14 V19 M10 19.5 H21" stroke="#fff" stroke-width="1.6"/><rect x="1.2" y="1.2" width="5.6" height="5.6" fill="#2b2726" stroke="#fff" stroke-width="1.4"/><path d="M4 7 V19.5 H10" stroke="#fff" stroke-width="1.4" fill="none"/></svg>
<svg style="left:1716.5px;top:1209.5px;" width="24" height="24" viewBox="0 0 24 24"><rect x="0.5" y="0.5" width="23" height="23" rx="2" fill="#2f8fdc"/><path d="M0.5 17 L7 23.5 H2.5 Q0.5 23.5 0.5 21.5 Z" fill="#f0a030"/><rect x="3.5" y="4.5" width="16" height="13" rx="2" fill="none" stroke="#cfe6fa" stroke-width="1.2"/><text x="5.4" y="14.4" font-family="Liberation Sans,sans-serif" font-size="8" font-weight="bold" fill="#e8f4ff">intel</text><ellipse cx="12" cy="11" rx="10" ry="5.5" fill="none" stroke="#bfe0fa" stroke-width="1" transform="rotate(-18 12 11)"/></svg>
<svg style="left:1749px;top:1210px;" width="26" height="24" viewBox="0 0 26 24"><path d="M2 8.5 H6 L11.5 3 V21 L6 15.5 H2 Z" fill="none" stroke="#fff" stroke-width="1.5" stroke-linejoin="round"/><path d="M14.5 9 Q16.5 12 14.5 15" stroke="#fff" stroke-width="1.4" fill="none"/><path d="M17.5 6 Q21.5 12 17.5 18" stroke="#cfcfcf" stroke-width="1.3" fill="none"/><path d="M20.5 3 Q26.5 12 20.5 21" stroke="#8a8a8a" stroke-width="1.2" fill="none"/></svg>
<div class="t" style="left:1788.8px;top:1209.4px;font-size:17px;line-height:24px;letter-spacing:0px;transform:scaleX(0.8353);transform-origin:0 0;color:#fff;">FRA</div>
<div class="t" style="left:1858.4px;top:1196.4px;font-size:17.4px;line-height:24px;letter-spacing:0px;transform:scaleX(0.8316);transform-origin:0 0;color:#fff;">13:24</div>
<div class="t" style="left:1836.8px;top:1222px;font-size:17.4px;line-height:24px;letter-spacing:-0.761px;color:#fff;">02/05/2022</div>
<svg style="left:1941px;top:1209px;" width="36" height="36" viewBox="0 0 36 36"><path d="M1.5 1.5 H23.5 V18 H10 L10 23 L5 18 H1.5 Z" fill="#fff"/><path d="M5 6 H20 M5 9.8 H20 M5 13.6 H20" stroke="#3a2e2c" stroke-width="1.5"/><circle cx="23" cy="23.4" r="10.4" fill="#3a302e" stroke="#b8b4b2" stroke-width="1.4"/><text x="23" y="29" text-anchor="middle" font-family="Liberation Sans,sans-serif" font-size="15.5" font-weight="bold" fill="#fff">1</text></svg>
<div style="left:1991.5px;top:1193px;width:1.2px;height:57px;background:#8a8482;"></div>
</body></html>
